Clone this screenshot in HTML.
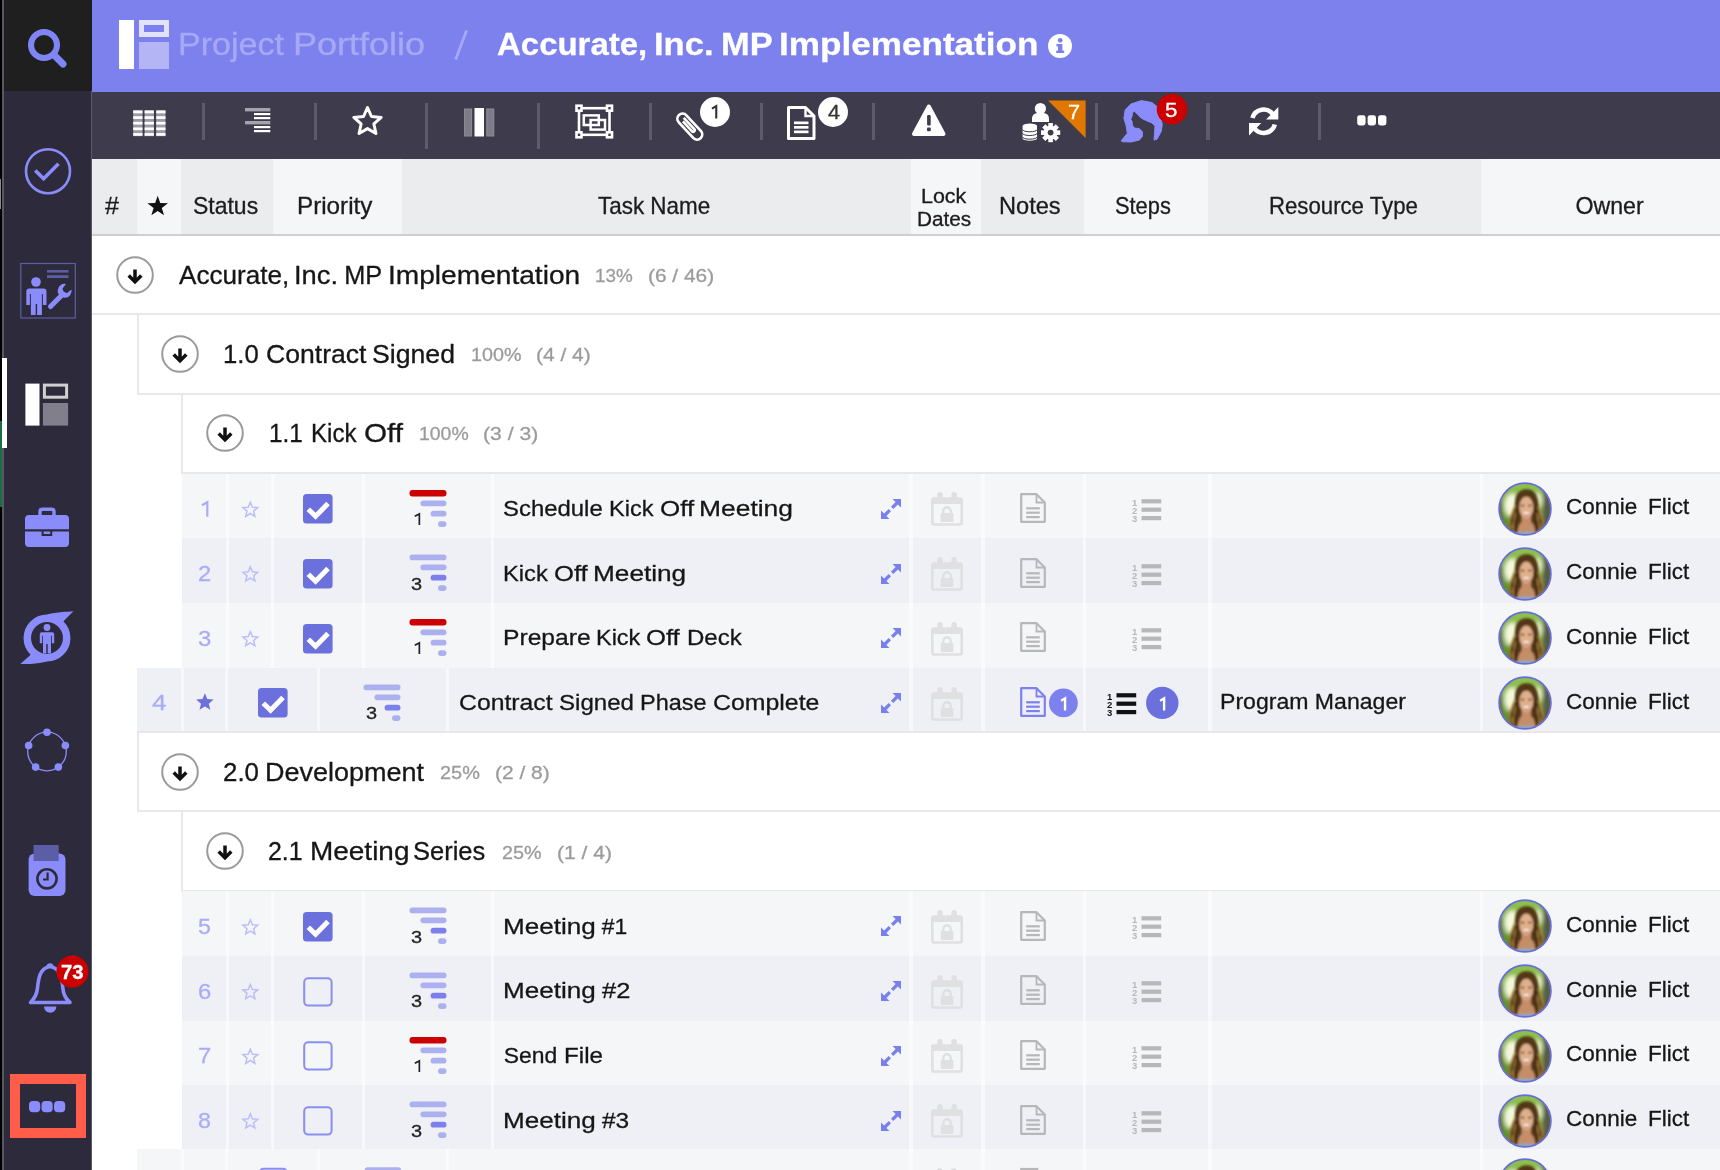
<!DOCTYPE html>
<html><head><meta charset="utf-8"><title>Project Portfolio</title>
<style>
html,body{margin:0;padding:0}
body{width:1720px;height:1170px;overflow:hidden;position:relative;background:#fff;font-family:"Liberation Sans",sans-serif}
body>div,#r>div,#r>svg,#t>span{position:absolute;display:block}
#t>span{white-space:pre;line-height:1;-webkit-text-stroke:0.3px;transform-origin:0 0}
svg{overflow:visible}
</style></head><body>
<div id="r" style="left:0;top:0;width:1720px;height:1170px;will-change:transform">
<div style="left:0.00px;top:0.00px;width:2.20px;height:1170.00px;background:#000;"></div>
<div style="left:2.20px;top:0.00px;width:1.80px;height:1170.00px;background:#585765;"></div>
<div style="left:4.00px;top:0.00px;width:88.00px;height:1170.00px;background:#2d2b3b;"></div>
<div style="left:4.00px;top:0.00px;width:88.00px;height:91.40px;background:#1f1f1f;"></div>
<div style="left:0.00px;top:421.00px;width:1.60px;height:86.00px;background:#167046;"></div>
<div style="left:0.00px;top:179.00px;width:1.20px;height:30.00px;background:#8a8a8a;"></div>
<div style="left:2.30px;top:358.00px;width:5.20px;height:90.00px;background:#fff;"></div>
<div style="left:92.00px;top:90.00px;width:1628.00px;height:71.00px;background:#3d3b4c;"></div>
<div style="left:92.00px;top:0.00px;width:1628.00px;height:91.50px;background:#7c81ee;"></div>
<div style="left:91.30px;top:91.20px;width:1.20px;height:1079.00px;background:#5c5b68;"></div>
<div style="left:119.00px;top:20.00px;width:15.00px;height:49.00px;background:#fff;"></div>
<div style="left:139.00px;top:20.00px;width:30.00px;height:17.00px;background:#e1e2fb;"></div>
<div style="left:144.00px;top:25.00px;width:20.00px;height:7.00px;background:#7c81ee;"></div>
<div style="left:139.00px;top:42.00px;width:30.00px;height:27.00px;background:#b3b5f5;"></div>
<svg style="left:450.00px;top:25.00px;" width="24" height="40" viewBox="0 0 24 40"><line x1="5.6" y1="34.4" x2="16.6" y2="5.4" stroke="#a6a9f5" stroke-width="2.7"/></svg>
<svg style="left:1047.50px;top:34.00px;" width="24" height="24" viewBox="0 0 24 24"><circle cx="12" cy="12" r="12" fill="#fff"/><rect x="10" y="10" width="4.4" height="8.5" fill="#7c81ee"/><rect x="8.4" y="10" width="4" height="2.4" fill="#7c81ee"/><rect x="8.2" y="16.6" width="8" height="2.4" fill="#7c81ee"/><circle cx="12.2" cy="6.3" r="2.4" fill="#7c81ee"/></svg>
<svg style="left:0;top:0" width="92" height="1170" viewBox="0 0 92 1170"><circle cx="44" cy="45" r="13" fill="none" stroke="#8085f5" stroke-width="6"/><line x1="54" y1="55" x2="63" y2="64" stroke="#8085f5" stroke-width="7" stroke-linecap="round"/><circle cx="48" cy="171.2" r="22" fill="none" stroke="#8a8cfb" stroke-width="2.6"/><polyline points="35.3,170.4 43.6,178.8 58.5,163.8" fill="none" stroke="#8a8cfb" stroke-width="3.6"/><rect x="20.8" y="263.5" width="54.5" height="54.5" fill="none" stroke="#5b5ea5" stroke-width="1.2"/><rect x="47" y="270" width="21.5" height="2.6" fill="#5b5ea5"/><rect x="47" y="275.2" width="21.5" height="2.8" fill="#5b5ea5"/><circle cx="36" cy="282" r="4.8" fill="#8a8cfb"/><path d="M28.5 288.5 h15 a3 3 0 0 1 3 3 v13.5 h-3.6 v-11 h-1 v21 h-4.8 v-11 h-1.4 v11 h-4.8 v-21 h-1 v11 h-3.6 v-13.5 a3 3 0 0 1 3 -3z" fill="#8a8cfb"/><line x1="50.5" y1="306.5" x2="63" y2="294" stroke="#8a8cfb" stroke-width="5" stroke-linecap="round"/><path d="M71.5 289.5 a7 7 0 1 1 -5.5 -5.5 l-3.5 4.5 l1 3.5 l3.5 1 z" fill="#8a8cfb"/><rect x="25.4" y="383.6" width="14.1" height="42" fill="#fff"/><rect x="44.4" y="385.1" width="22.2" height="12.1" fill="none" stroke="#d0d0d0" stroke-width="3"/><rect x="42.9" y="403" width="25.2" height="22.6" fill="#807f8b"/><path d="M40 515 v-3.5 a2.2 2.2 0 0 1 2.2 -2.2 h9.6 a2.2 2.2 0 0 1 2.2 2.2 v3.5" fill="none" stroke="#8a8cfb" stroke-width="3.4"/><path d="M29 515 h36 a4 4 0 0 1 4 4 v10.2 h-44 v-10.2 a4 4 0 0 1 4 -4z M25 531.4 h16.6 v4.6 h10.6 v-4.6 h16.8 v11.6 a4 4 0 0 1 -4 4 h-36 a4 4 0 0 1 -4 -4z M43.6 531.4 h6.6 v2.6 h-6.6z" fill="#8a8cfb"/><circle cx="47" cy="638" r="19.7" fill="none" stroke="#8a8cfb" stroke-width="7.5"/><path d="M47 614.5 C58 611.5 67 612 73.4 611.2 C69 616 65 619 62 623z M47 661.5 C36 664.5 27 664 20.3 664 C25 660 29 656.5 32 653z" fill="#8a8cfb"/><circle cx="47" cy="627.5" r="3.4" fill="#8a8cfb"/><path d="M41.8 632.3 h10.4 a2 2 0 0 1 2 2 v9 h-2.4 v-7.5 h-.8 v17.6 h-3.3 v-9.5 h-1.4 v9.5 h-3.3 v-17.6 h-.8 v7.5 h-2.4 v-9 a2 2 0 0 1 2 -2z" fill="#8a8cfb"/><circle cx="47" cy="751.5" r="19.3" fill="none" stroke="#8a8cfb" stroke-width="1.3"/><circle cx="47.00" cy="732.20" r="3.8" fill="#8a8cfb"/><circle cx="65.36" cy="745.54" r="3.8" fill="#8a8cfb"/><circle cx="58.34" cy="767.11" r="3.8" fill="#8a8cfb"/><circle cx="35.66" cy="767.11" r="3.8" fill="#8a8cfb"/><circle cx="28.64" cy="745.54" r="3.8" fill="#8a8cfb"/><rect x="28.6" y="853.6" width="36.9" height="42.4" rx="6" fill="#8a8cfb"/><rect x="33.5" y="845" width="25.2" height="16" fill="#5b5ea5"/><circle cx="47" cy="878.8" r="9.6" fill="none" stroke="#2d2b3b" stroke-width="2.6"/><path d="M47.6 872.5 v7 h-4.6" fill="none" stroke="#2d2b3b" stroke-width="2.2"/><path d="M50 966.5 C40 968 38.5 978 37.5 988 C36.8 996 33 1000 30.5 1002.5 H70 C67 1000 63.5 996 62.8 988 C62 978 60 968 50 966.5z" fill="none" stroke="#8a8cfb" stroke-width="3.6" stroke-linejoin="round"/><path d="M46.5 966 a3.6 3.6 0 0 1 7 0z" fill="#8a8cfb"/><path d="M44 1006.5 h12.4 a6.2 6.2 0 0 1 -12.4 0z" fill="#8a8cfb"/><circle cx="72.4" cy="971.6" r="16" fill="#cc0000"/><rect x="15" y="1079" width="66" height="54" fill="none" stroke="#ff5c49" stroke-width="10"/><rect x="29" y="1101" width="11.2" height="11.2" rx="4" fill="#8a8cfb"/><rect x="41.5" y="1101" width="11.2" height="11.2" rx="4" fill="#8a8cfb"/><rect x="54" y="1101" width="11.2" height="11.2" rx="4" fill="#8a8cfb"/></svg>
<div style="left:202.00px;top:102.50px;width:3.30px;height:37.50px;background:#5d5c69;"></div>
<div style="left:313.50px;top:102.50px;width:3.30px;height:37.50px;background:#5d5c69;"></div>
<div style="left:425.00px;top:102.50px;width:3.30px;height:46.50px;background:#5d5c69;"></div>
<div style="left:537.00px;top:102.50px;width:3.30px;height:46.50px;background:#5d5c69;"></div>
<div style="left:648.50px;top:102.50px;width:3.30px;height:37.50px;background:#5d5c69;"></div>
<div style="left:760.00px;top:102.50px;width:3.30px;height:37.50px;background:#5d5c69;"></div>
<div style="left:871.50px;top:102.50px;width:3.30px;height:37.50px;background:#5d5c69;"></div>
<div style="left:983.00px;top:102.50px;width:3.30px;height:37.50px;background:#5d5c69;"></div>
<div style="left:1094.50px;top:102.50px;width:3.30px;height:37.50px;background:#5d5c69;"></div>
<div style="left:1206.30px;top:102.50px;width:3.30px;height:37.50px;background:#5d5c69;"></div>
<div style="left:1317.70px;top:102.50px;width:3.30px;height:37.50px;background:#5d5c69;"></div>
<svg style="left:0;top:0" width="1720" height="160" viewBox="0 0 1720 160"><rect x="133.2" y="110" width="9.3" height="26.2" fill="#9c9ba6"/><rect x="133.2" y="110.60" width="9.3" height="2.7" fill="#fff"/><rect x="133.2" y="116.22" width="9.3" height="2.7" fill="#fff"/><rect x="133.2" y="121.84" width="9.3" height="2.7" fill="#fff"/><rect x="133.2" y="127.46" width="9.3" height="2.7" fill="#fff"/><rect x="133.2" y="133.08" width="9.3" height="2.7" fill="#fff"/><rect x="144.6" y="110" width="9.3" height="26.2" fill="#9c9ba6"/><rect x="144.6" y="110.60" width="9.3" height="2.7" fill="#fff"/><rect x="144.6" y="116.22" width="9.3" height="2.7" fill="#fff"/><rect x="144.6" y="121.84" width="9.3" height="2.7" fill="#fff"/><rect x="144.6" y="127.46" width="9.3" height="2.7" fill="#fff"/><rect x="144.6" y="133.08" width="9.3" height="2.7" fill="#fff"/><rect x="156.2" y="110" width="9.3" height="26.2" fill="#9c9ba6"/><rect x="156.2" y="110.60" width="9.3" height="2.7" fill="#fff"/><rect x="156.2" y="116.22" width="9.3" height="2.7" fill="#fff"/><rect x="156.2" y="121.84" width="9.3" height="2.7" fill="#fff"/><rect x="156.2" y="127.46" width="9.3" height="2.7" fill="#fff"/><rect x="156.2" y="133.08" width="9.3" height="2.7" fill="#fff"/><rect x="245" y="108" width="25.3" height="3.4" fill="#a3a2ad"/><rect x="254" y="113" width="16.3" height="2.2" fill="#fff"/><rect x="254" y="117" width="16.3" height="2.2" fill="#fff"/><rect x="245" y="121" width="25.3" height="3.4" fill="#a3a2ad"/><rect x="254" y="126" width="16.3" height="2.2" fill="#fff"/><rect x="254" y="130" width="16.3" height="2.2" fill="#fff"/><polygon points="367.50,107.50 371.44,116.48 381.20,117.45 373.87,123.97 375.96,133.55 367.50,128.60 359.04,133.55 361.13,123.97 353.80,117.45 363.56,116.48" fill="none" stroke="#fff" stroke-width="3" stroke-linejoin="round"/><rect x="464.6" y="109" width="7" height="27" fill="#7d7c88" stroke="#8f8e99" stroke-width="1"/><rect x="474.5" y="108" width="9.5" height="28.5" fill="#fff"/><rect x="486.8" y="109" width="7" height="27" fill="#7d7c88" stroke="#8f8e99" stroke-width="1"/><rect x="579" y="108.2" width="30.5" height="26.6" fill="none" stroke="#fff" stroke-width="2.6"/><rect x="575.2" y="104.4" width="7.6" height="7.6" fill="#fff"/><rect x="577.8" y="107.0" width="2.4" height="2.4" fill="#3d3b4c"/><rect x="605.7" y="104.4" width="7.6" height="7.6" fill="#fff"/><rect x="608.3" y="107.0" width="2.4" height="2.4" fill="#3d3b4c"/><rect x="575.2" y="131.0" width="7.6" height="7.6" fill="#fff"/><rect x="577.8" y="133.60000000000002" width="2.4" height="2.4" fill="#3d3b4c"/><rect x="605.7" y="131.0" width="7.6" height="7.6" fill="#fff"/><rect x="608.3" y="133.60000000000002" width="2.4" height="2.4" fill="#3d3b4c"/><rect x="583.8" y="115.4" width="15" height="9.6" fill="none" stroke="#fff" stroke-width="2.5"/><rect x="590.6" y="120" width="14.4" height="9.6" fill="none" stroke="#fff" stroke-width="2.5"/><g transform="translate(689.8,126.6) rotate(-43)"><rect x="-5.2" y="-15.8" width="10.4" height="31.6" rx="5.2" fill="none" stroke="#fff" stroke-width="2.7"/><path d="M-1.5 -8.5 v13.5 a1.5 1.5 0 0 0 3 0 v-15.5" fill="none" stroke="#fff" stroke-width="2.6"/></g><circle cx="715" cy="112" r="15" fill="#fff"/><path d="M788.5 107.5 h17 l8.5 8.5 v22.5 h-25.5z" fill="none" stroke="#fff" stroke-width="3" stroke-linejoin="round"/><path d="M805.5 107.5 v8.5 h8.5" fill="none" stroke="#fff" stroke-width="2.4"/><rect x="794" y="121.5" width="14.5" height="2.7" fill="#fff"/><rect x="794" y="126" width="14.5" height="2.7" fill="#fff"/><rect x="794" y="130.5" width="14.5" height="2.7" fill="#fff"/><circle cx="833" cy="112" r="15" fill="#fff"/><path d="M928.8 106.5 L943.5 134 H914 Z" fill="#fff" stroke="#fff" stroke-width="4" stroke-linejoin="round"/><rect x="927.1" y="115" width="3.6" height="10.5" rx="1" fill="#3d3b4c"/><rect x="927" y="127.5" width="3.8" height="3.8" rx="1" fill="#3d3b4c"/><circle cx="1040.4" cy="108.5" r="5.6" fill="#fff"/><path d="M1032 122 v-3.5 a5.5 5.5 0 0 1 5.5 -5.5 h6 a5.5 5.5 0 0 1 5.5 5.5 v3.5z" fill="#fff"/><rect x="1022.6" y="126" width="14.4" height="12.4" fill="#fff"/><ellipse cx="1029.8" cy="126" rx="7.2" ry="2.4" fill="#fff"/><ellipse cx="1029.8" cy="138.4" rx="7.2" ry="2.4" fill="#fff"/><path d="M1022.6 129.6 a7.2 2.2 0 0 0 14.4 0" fill="none" stroke="#3d3b4c" stroke-width="1"/><path d="M1022.6 133.3 a7.2 2.2 0 0 0 14.4 0" fill="none" stroke="#3d3b4c" stroke-width="1"/><path d="M1022.6 137 a7.2 2.2 0 0 0 14.4 0" fill="none" stroke="#3d3b4c" stroke-width="1"/><rect x="-2.3" y="-9.6" width="4.6" height="6" fill="#fff" transform="translate(1050.6,132.6) rotate(0)"/><rect x="-2.3" y="-9.6" width="4.6" height="6" fill="#fff" transform="translate(1050.6,132.6) rotate(45)"/><rect x="-2.3" y="-9.6" width="4.6" height="6" fill="#fff" transform="translate(1050.6,132.6) rotate(90)"/><rect x="-2.3" y="-9.6" width="4.6" height="6" fill="#fff" transform="translate(1050.6,132.6) rotate(135)"/><rect x="-2.3" y="-9.6" width="4.6" height="6" fill="#fff" transform="translate(1050.6,132.6) rotate(180)"/><rect x="-2.3" y="-9.6" width="4.6" height="6" fill="#fff" transform="translate(1050.6,132.6) rotate(225)"/><rect x="-2.3" y="-9.6" width="4.6" height="6" fill="#fff" transform="translate(1050.6,132.6) rotate(270)"/><rect x="-2.3" y="-9.6" width="4.6" height="6" fill="#fff" transform="translate(1050.6,132.6) rotate(315)"/><circle cx="1050.6" cy="132.6" r="6.8" fill="#fff"/><circle cx="1050.6" cy="132.6" r="2.9" fill="#3d3b4c"/><polygon points="1048,100.6 1085.6,100.6 1085.6,138" fill="#e07800"/><polygon points="1121.25,140.7 1127.3,133.3 1126.2,126 1123.9,118.2 1125.2,109.8 1130.9,104 1141.4,100.6 1151.9,102.5 1157.1,106.7 1160.2,115.5 1162.3,124.4 1161.3,131.2 1157.1,139.1 1154,140.1 1154.5,133.9 1155,126 1151.9,122.9 1146.6,120.8 1141.4,118.2 1137.2,114 1134.6,111.4 1132.5,112.4 1132,116.6 1130.7,119.2 1132,121.3 1132.5,125.5 1134.6,128.1 1139.3,128.6 1142.4,131.8 1142.4,136.5 1139.3,140.1 1130.9,142 1122,141.7" fill="#8a8cfb" stroke="#8a8cfb" stroke-width="1" stroke-linejoin="round"/><circle cx="1172" cy="109.3" r="15.3" fill="#cc0000"/><path d="M1252.5 118 A11.5 11.5 0 0 1 1273 114.5" fill="none" stroke="#fff" stroke-width="4.6"/><polygon points="1278.3,107 1278.3,119.5 1266,119.5" fill="#fff"/><path d="M1274.8 124.5 A11.5 11.5 0 0 1 1254.3 128" fill="none" stroke="#fff" stroke-width="4.6"/><polygon points="1249,135.5 1249,123 1261.3,123" fill="#fff"/><rect x="1357.2" y="115.2" width="8.4" height="10.2" rx="2.4" fill="#fff"/><rect x="1367.6" y="115.2" width="8.4" height="10.2" rx="2.4" fill="#fff"/><rect x="1378" y="115.2" width="8.4" height="10.2" rx="2.4" fill="#fff"/></svg>
<div style="left:92.00px;top:158.50px;width:46.00px;height:76.00px;background:#ebecee;"></div>
<div style="left:136.50px;top:158.50px;width:45.60px;height:76.00px;background:#f5f6f8;"></div>
<div style="left:180.60px;top:158.50px;width:94.30px;height:76.00px;background:#ebecee;"></div>
<div style="left:273.40px;top:158.50px;width:129.60px;height:76.00px;background:#f5f6f8;"></div>
<div style="left:401.50px;top:158.50px;width:510.80px;height:76.00px;background:#ebecee;"></div>
<div style="left:910.80px;top:158.50px;width:71.90px;height:76.00px;background:#f5f6f8;"></div>
<div style="left:981.20px;top:158.50px;width:104.10px;height:76.00px;background:#ebecee;"></div>
<div style="left:1083.80px;top:158.50px;width:125.50px;height:76.00px;background:#f5f6f8;"></div>
<div style="left:1207.80px;top:158.50px;width:274.70px;height:76.00px;background:#ebecee;"></div>
<div style="left:1481.00px;top:158.50px;width:240.50px;height:76.00px;background:#f5f6f8;"></div>
<div style="left:92.00px;top:234.00px;width:1628.00px;height:2.00px;background:#cfcfd1;"></div>
<svg style="left:0;top:0" width="400" height="240"><polygon points="157.70,195.80 160.23,203.12 167.97,203.26 161.79,207.93 164.05,215.34 157.70,210.90 151.35,215.34 153.61,207.93 147.43,203.26 155.17,203.12" fill="#111"/></svg>
<div style="left:92.00px;top:313.40px;width:1628.00px;height:2.00px;background:#e8e8ea;"></div>
<svg style="left:112.70px;top:252.70px" width="44" height="44" viewBox="-22 -22 44 44"><circle cx="0" cy="0" r="17.8" fill="#fff" stroke="#9a9a9a" stroke-width="2"/><path d="M0 -5.6 V6.2 M-6.3 0.6 L0 6.9 L6.3 0.6" fill="none" stroke="#111" stroke-width="3.5" stroke-linejoin="miter"/></svg>
<div style="left:136.50px;top:392.70px;width:1583.50px;height:2.00px;background:#e8e8ea;"></div>
<div style="left:136.50px;top:315.00px;width:2.00px;height:79.30px;background:#e8e8ea;"></div>
<svg style="left:158.00px;top:331.90px" width="44" height="44" viewBox="-22 -22 44 44"><circle cx="0" cy="0" r="17.8" fill="#fff" stroke="#9a9a9a" stroke-width="2"/><path d="M0 -5.6 V6.2 M-6.3 0.6 L0 6.9 L6.3 0.6" fill="none" stroke="#111" stroke-width="3.5" stroke-linejoin="miter"/></svg>
<div style="left:181.00px;top:472.00px;width:1539.00px;height:2.00px;background:#e8e8ea;"></div>
<div style="left:181.00px;top:394.30px;width:2.00px;height:79.30px;background:#e8e8ea;"></div>
<svg style="left:203.00px;top:411.40px" width="44" height="44" viewBox="-22 -22 44 44"><circle cx="0" cy="0" r="17.8" fill="#fff" stroke="#9a9a9a" stroke-width="2"/><path d="M0 -5.6 V6.2 M-6.3 0.6 L0 6.9 L6.3 0.6" fill="none" stroke="#111" stroke-width="3.5" stroke-linejoin="miter"/></svg>
<div style="left:136.50px;top:731.40px;width:1583.50px;height:1.80px;background:#e8e8ea;"></div>
<div style="left:136.50px;top:810.00px;width:1583.50px;height:2.00px;background:#e8e8ea;"></div>
<div style="left:136.50px;top:733.00px;width:2.00px;height:78.60px;background:#e8e8ea;"></div>
<svg style="left:158.00px;top:749.50px" width="44" height="44" viewBox="-22 -22 44 44"><circle cx="0" cy="0" r="17.8" fill="#fff" stroke="#9a9a9a" stroke-width="2"/><path d="M0 -5.6 V6.2 M-6.3 0.6 L0 6.9 L6.3 0.6" fill="none" stroke="#111" stroke-width="3.5" stroke-linejoin="miter"/></svg>
<div style="left:181.00px;top:889.60px;width:1539.00px;height:2.00px;background:#e8e8ea;"></div>
<div style="left:181.00px;top:811.60px;width:2.00px;height:79.60px;background:#e8e8ea;"></div>
<svg style="left:203.00px;top:829.30px" width="44" height="44" viewBox="-22 -22 44 44"><circle cx="0" cy="0" r="17.8" fill="#fff" stroke="#9a9a9a" stroke-width="2"/><path d="M0 -5.6 V6.2 M-6.3 0.6 L0 6.9 L6.3 0.6" fill="none" stroke="#111" stroke-width="3.5" stroke-linejoin="miter"/></svg>
<div style="left:182.20px;top:473.60px;width:1537.80px;height:65.90px;background:#f5f6f8;"></div>
<div style="left:225.80px;top:473.60px;width:3.00px;height:64.70px;background:rgba(255,255,255,0.55);"></div>
<div style="left:270.60px;top:473.60px;width:3.00px;height:64.70px;background:rgba(255,255,255,0.55);"></div>
<div style="left:362.40px;top:473.60px;width:3.00px;height:64.70px;background:rgba(255,255,255,0.55);"></div>
<div style="left:491.40px;top:473.60px;width:3.00px;height:64.70px;background:rgba(255,255,255,0.55);"></div>
<div style="left:909.00px;top:473.60px;width:3.60px;height:64.70px;background:rgba(255,255,255,0.55);"></div>
<div style="left:981.20px;top:473.60px;width:3.60px;height:64.70px;background:rgba(255,255,255,0.55);"></div>
<div style="left:1082.60px;top:473.60px;width:3.60px;height:64.70px;background:rgba(255,255,255,0.55);"></div>
<div style="left:1208.00px;top:473.60px;width:3.60px;height:64.70px;background:rgba(255,255,255,0.55);"></div>
<div style="left:1479.80px;top:473.60px;width:3.60px;height:64.70px;background:rgba(255,255,255,0.55);"></div>
<svg style="left:0;top:0" width="400" height="1170"><polygon points="250.30,502.20 252.36,507.17 257.72,507.59 253.63,511.08 254.88,516.31 250.30,513.50 245.72,516.31 246.97,511.08 242.88,507.59 248.24,507.17" fill="none" stroke="#bcbef8" stroke-width="1.5"/></svg>
<svg style="left:303.15px;top:494.20px" width="30" height="30"><rect x="0" y="0" width="29.6" height="29.6" rx="3.6" fill="#6b70dd"/><polyline points="5.3,15.2 12.6,22.2 25,9.6" fill="none" stroke="#fff" stroke-width="5"/></svg>
<svg style="left:409.55px;top:489.70px" width="37" height="38"><rect x="-0.5" y="0" width="37" height="6.6" rx="3" fill="#cc0000"/><rect x="10.4" y="10.4" width="26.1" height="5.8" rx="2.9" fill="#adb0ee"/><rect x="20.6" y="20.8" width="15.9" height="5.8" rx="2.9" fill="#adb0ee"/><rect x="28" y="31.2" width="8.5" height="5.8" rx="2.9" fill="#adb0ee"/></svg>
<svg style="left:880.50px;top:498.80px" width="20" height="20"><path d="M11.5 0 H20 V8.5 L16.9 5.4 L12.3 10 L10 7.7 L14.6 3.1 Z M8.5 20 H0 V11.5 L3.1 14.6 L7.7 10 L10 12.3 L5.4 16.9 Z" fill="#7a7fee"/></svg>
<svg style="left:930.80px;top:492.40px" width="32" height="34"><rect x="1.3" y="6.5" width="29.4" height="26" rx="1.5" fill="none" stroke="#e0e0e3" stroke-width="2.6"/><rect x="1.3" y="6.5" width="29.4" height="5.5" fill="#e0e0e3"/><rect x="6.2" y="0" width="5.4" height="10" rx="2.7" fill="#e0e0e3"/><rect x="20.4" y="0" width="5.4" height="10" rx="2.7" fill="#e0e0e3"/><rect x="9.6" y="21" width="12.8" height="9" rx="1" fill="#e0e0e3"/><path d="M12.3 21.5 v-2.5 a3.7 3.7 0 0 1 7.4 0 v2.5" fill="none" stroke="#e0e0e3" stroke-width="2.4"/></svg>
<svg style="left:1020.00px;top:493.00px" width="26" height="30"><path d="M1.2 1.2 h15.3 l8.3 8.3 v19.3 h-23.6z" fill="none" stroke="#b7b7b9" stroke-width="2.2" stroke-linejoin="round"/><path d="M16.5 1.2 v8.3 h8.3" fill="none" stroke="#b7b7b9" stroke-width="1.8"/><rect x="6.2" y="14.2" width="13.6" height="2.2" fill="#b7b7b9"/><rect x="6.2" y="18.6" width="13.6" height="2.2" fill="#b7b7b9"/><rect x="6.2" y="23" width="13.6" height="2.2" fill="#b7b7b9"/></svg>
<svg style="left:1131.80px;top:495.80px" width="30" height="28"><rect x="9.5" y="3.2" width="19.7" height="4.2" fill="#b7b7b9"/><text x="0" y="9.600000000000001" font-size="9.5" font-weight="700" fill="#b7b7b9" font-family="Liberation Sans">1</text><rect x="9.5" y="11.6" width="19.7" height="4.2" fill="#b7b7b9"/><text x="0" y="18.0" font-size="9.5" font-weight="700" fill="#b7b7b9" font-family="Liberation Sans">2</text><rect x="9.5" y="20" width="19.7" height="4.2" fill="#b7b7b9"/><text x="0" y="26.4" font-size="9.5" font-weight="700" fill="#b7b7b9" font-family="Liberation Sans">3</text></svg>
<svg style="left:1496.50px;top:480.80px" width="56" height="56" viewBox="-28 -28 56 56"><defs><clipPath id="c1"><circle cx="0" cy="0" r="25.4"/></clipPath><filter id="b1" x="-20%" y="-20%" width="140%" height="140%"><feGaussianBlur stdDeviation="0.9"/></filter><filter id="bb1" x="-30%" y="-30%" width="160%" height="160%"><feGaussianBlur stdDeviation="2.2"/></filter></defs><g clip-path="url(#c1)"><rect x="-27" y="-27" width="54" height="54" fill="#7fae45"/><g filter="url(#bb1)"><ellipse cx="-13" cy="-4" rx="8" ry="12" fill="#f3f8dc"/><ellipse cx="-15" cy="14" rx="9" ry="7" fill="#5c9a2c"/><ellipse cx="0" cy="-22" rx="16" ry="6" fill="#8dc04e"/><ellipse cx="13" cy="-9" rx="4.5" ry="8" fill="#e3efc0"/><rect x="18" y="-20" width="9" height="48" fill="#56584a"/><rect x="-27" y="-8" width="5" height="30" fill="#5b6040"/></g><g filter="url(#b1)"><path d="M1.5 -19.8 C-6 -19.8 -9.8 -14 -10 -7 C-10.2 -1 -12.5 2 -14.5 7 C-17.5 14 -17.5 21 -14 27 L17 27 C20.5 21 20.5 14 17.5 8 C15 3 14 0 13.4 -6 C12.6 -14 9 -19.8 1.5 -19.8z" fill="#523819"/><path d="M-9.5 -3 C-13 1 -12 5 -14.5 9 C-17 13 -14 17 -15.5 21 M-8.5 3 C-11.5 7 -9 11 -11.5 15 C-13 18 -10.5 21 -11.5 25 M13 -2 C16 2 14.5 6 17 10 C19 14 16 18 17.5 22 M11.5 4 C14 8 12 12 14 16 C15.5 19 13 22 13.5 25" stroke="#a8823f" stroke-width="1.8" fill="none"/><path d="M-6.8 -2 C-9 3 -7.5 8 -9.5 12 C-11 16 -9 20 -9.5 24 M9.6 -1 C11.5 4 10 9 12 13 C13.5 17 11.5 21 12 24" stroke="#3a2611" stroke-width="1.8" fill="none"/><path d="M-3.4 6 h9.4 v7 c2.5 2 4 4 5 14 h-19 c1 -9 2 -12 4.6 -14z" fill="#c48e68"/><ellipse cx="1.3" cy="-1.6" rx="7" ry="10.8" fill="#e0b08c"/><path d="M-6.4 -5 C-6 -15 8 -16 9 -5 C7 -12 3 -13.4 1.5 -13.6 C0 -13.4 -4.5 -12 -6.4 -5z" fill="#4a3118"/><rect x="-4.2" y="-4.2" width="3.6" height="1.6" rx=".8" fill="#5a3f33"/><rect x="3" y="-4.2" width="3.6" height="1.6" rx=".8" fill="#5a3f33"/><ellipse cx="1.2" cy="4.4" rx="2.7" ry="1.2" fill="#fff"/><path d="M-1.6 5.6 a2.9 1.6 0 0 0 5.6 0z" fill="#b9555a"/><path d="M-11 24.2 C-5 21.8 7 21.8 13 24.2 V29 H-11z" fill="#93a6bd"/></g></g><circle cx="0" cy="0" r="25.9" fill="none" stroke="#676cd8" stroke-width="1.7"/></svg>
<div style="left:182.20px;top:538.30px;width:1537.80px;height:65.90px;background:#eff0f5;"></div>
<div style="left:225.80px;top:538.30px;width:3.00px;height:64.70px;background:rgba(255,255,255,0.55);"></div>
<div style="left:270.60px;top:538.30px;width:3.00px;height:64.70px;background:rgba(255,255,255,0.55);"></div>
<div style="left:362.40px;top:538.30px;width:3.00px;height:64.70px;background:rgba(255,255,255,0.55);"></div>
<div style="left:491.40px;top:538.30px;width:3.00px;height:64.70px;background:rgba(255,255,255,0.55);"></div>
<div style="left:909.00px;top:538.30px;width:3.60px;height:64.70px;background:rgba(255,255,255,0.55);"></div>
<div style="left:981.20px;top:538.30px;width:3.60px;height:64.70px;background:rgba(255,255,255,0.55);"></div>
<div style="left:1082.60px;top:538.30px;width:3.60px;height:64.70px;background:rgba(255,255,255,0.55);"></div>
<div style="left:1208.00px;top:538.30px;width:3.60px;height:64.70px;background:rgba(255,255,255,0.55);"></div>
<div style="left:1479.80px;top:538.30px;width:3.60px;height:64.70px;background:rgba(255,255,255,0.55);"></div>
<svg style="left:0;top:0" width="400" height="1170"><polygon points="250.30,566.90 252.36,571.87 257.72,572.29 253.63,575.78 254.88,581.01 250.30,578.20 245.72,581.01 246.97,575.78 242.88,572.29 248.24,571.87" fill="none" stroke="#bcbef8" stroke-width="1.5"/></svg>
<svg style="left:303.15px;top:558.90px" width="30" height="30"><rect x="0" y="0" width="29.6" height="29.6" rx="3.6" fill="#6b70dd"/><polyline points="5.3,15.2 12.6,22.2 25,9.6" fill="none" stroke="#fff" stroke-width="5"/></svg>
<svg style="left:409.55px;top:554.40px" width="37" height="38"><rect x="-0.5" y="0.6" width="37" height="5.6" rx="2.8" fill="#adb0ee"/><rect x="10.4" y="10.4" width="26.1" height="5.8" rx="2.9" fill="#adb0ee"/><rect x="20.6" y="20.8" width="15.9" height="5.8" rx="2.9" fill="#7b80ee"/><rect x="28" y="31.2" width="8.5" height="5.8" rx="2.9" fill="#adb0ee"/></svg>
<svg style="left:880.50px;top:563.50px" width="20" height="20"><path d="M11.5 0 H20 V8.5 L16.9 5.4 L12.3 10 L10 7.7 L14.6 3.1 Z M8.5 20 H0 V11.5 L3.1 14.6 L7.7 10 L10 12.3 L5.4 16.9 Z" fill="#7a7fee"/></svg>
<svg style="left:930.80px;top:557.10px" width="32" height="34"><rect x="1.3" y="6.5" width="29.4" height="26" rx="1.5" fill="none" stroke="#e0e0e3" stroke-width="2.6"/><rect x="1.3" y="6.5" width="29.4" height="5.5" fill="#e0e0e3"/><rect x="6.2" y="0" width="5.4" height="10" rx="2.7" fill="#e0e0e3"/><rect x="20.4" y="0" width="5.4" height="10" rx="2.7" fill="#e0e0e3"/><rect x="9.6" y="21" width="12.8" height="9" rx="1" fill="#e0e0e3"/><path d="M12.3 21.5 v-2.5 a3.7 3.7 0 0 1 7.4 0 v2.5" fill="none" stroke="#e0e0e3" stroke-width="2.4"/></svg>
<svg style="left:1020.00px;top:557.70px" width="26" height="30"><path d="M1.2 1.2 h15.3 l8.3 8.3 v19.3 h-23.6z" fill="none" stroke="#b7b7b9" stroke-width="2.2" stroke-linejoin="round"/><path d="M16.5 1.2 v8.3 h8.3" fill="none" stroke="#b7b7b9" stroke-width="1.8"/><rect x="6.2" y="14.2" width="13.6" height="2.2" fill="#b7b7b9"/><rect x="6.2" y="18.6" width="13.6" height="2.2" fill="#b7b7b9"/><rect x="6.2" y="23" width="13.6" height="2.2" fill="#b7b7b9"/></svg>
<svg style="left:1131.80px;top:560.50px" width="30" height="28"><rect x="9.5" y="3.2" width="19.7" height="4.2" fill="#b7b7b9"/><text x="0" y="9.600000000000001" font-size="9.5" font-weight="700" fill="#b7b7b9" font-family="Liberation Sans">1</text><rect x="9.5" y="11.6" width="19.7" height="4.2" fill="#b7b7b9"/><text x="0" y="18.0" font-size="9.5" font-weight="700" fill="#b7b7b9" font-family="Liberation Sans">2</text><rect x="9.5" y="20" width="19.7" height="4.2" fill="#b7b7b9"/><text x="0" y="26.4" font-size="9.5" font-weight="700" fill="#b7b7b9" font-family="Liberation Sans">3</text></svg>
<svg style="left:1496.50px;top:545.50px" width="56" height="56" viewBox="-28 -28 56 56"><defs><clipPath id="c2"><circle cx="0" cy="0" r="25.4"/></clipPath><filter id="b2" x="-20%" y="-20%" width="140%" height="140%"><feGaussianBlur stdDeviation="0.9"/></filter><filter id="bb2" x="-30%" y="-30%" width="160%" height="160%"><feGaussianBlur stdDeviation="2.2"/></filter></defs><g clip-path="url(#c2)"><rect x="-27" y="-27" width="54" height="54" fill="#7fae45"/><g filter="url(#bb2)"><ellipse cx="-13" cy="-4" rx="8" ry="12" fill="#f3f8dc"/><ellipse cx="-15" cy="14" rx="9" ry="7" fill="#5c9a2c"/><ellipse cx="0" cy="-22" rx="16" ry="6" fill="#8dc04e"/><ellipse cx="13" cy="-9" rx="4.5" ry="8" fill="#e3efc0"/><rect x="18" y="-20" width="9" height="48" fill="#56584a"/><rect x="-27" y="-8" width="5" height="30" fill="#5b6040"/></g><g filter="url(#b2)"><path d="M1.5 -19.8 C-6 -19.8 -9.8 -14 -10 -7 C-10.2 -1 -12.5 2 -14.5 7 C-17.5 14 -17.5 21 -14 27 L17 27 C20.5 21 20.5 14 17.5 8 C15 3 14 0 13.4 -6 C12.6 -14 9 -19.8 1.5 -19.8z" fill="#523819"/><path d="M-9.5 -3 C-13 1 -12 5 -14.5 9 C-17 13 -14 17 -15.5 21 M-8.5 3 C-11.5 7 -9 11 -11.5 15 C-13 18 -10.5 21 -11.5 25 M13 -2 C16 2 14.5 6 17 10 C19 14 16 18 17.5 22 M11.5 4 C14 8 12 12 14 16 C15.5 19 13 22 13.5 25" stroke="#a8823f" stroke-width="1.8" fill="none"/><path d="M-6.8 -2 C-9 3 -7.5 8 -9.5 12 C-11 16 -9 20 -9.5 24 M9.6 -1 C11.5 4 10 9 12 13 C13.5 17 11.5 21 12 24" stroke="#3a2611" stroke-width="1.8" fill="none"/><path d="M-3.4 6 h9.4 v7 c2.5 2 4 4 5 14 h-19 c1 -9 2 -12 4.6 -14z" fill="#c48e68"/><ellipse cx="1.3" cy="-1.6" rx="7" ry="10.8" fill="#e0b08c"/><path d="M-6.4 -5 C-6 -15 8 -16 9 -5 C7 -12 3 -13.4 1.5 -13.6 C0 -13.4 -4.5 -12 -6.4 -5z" fill="#4a3118"/><rect x="-4.2" y="-4.2" width="3.6" height="1.6" rx=".8" fill="#5a3f33"/><rect x="3" y="-4.2" width="3.6" height="1.6" rx=".8" fill="#5a3f33"/><ellipse cx="1.2" cy="4.4" rx="2.7" ry="1.2" fill="#fff"/><path d="M-1.6 5.6 a2.9 1.6 0 0 0 5.6 0z" fill="#b9555a"/><path d="M-11 24.2 C-5 21.8 7 21.8 13 24.2 V29 H-11z" fill="#93a6bd"/></g></g><circle cx="0" cy="0" r="25.9" fill="none" stroke="#676cd8" stroke-width="1.7"/></svg>
<div style="left:182.20px;top:603.00px;width:1537.80px;height:65.90px;background:#f5f6f8;"></div>
<div style="left:225.80px;top:603.00px;width:3.00px;height:64.70px;background:rgba(255,255,255,0.55);"></div>
<div style="left:270.60px;top:603.00px;width:3.00px;height:64.70px;background:rgba(255,255,255,0.55);"></div>
<div style="left:362.40px;top:603.00px;width:3.00px;height:64.70px;background:rgba(255,255,255,0.55);"></div>
<div style="left:491.40px;top:603.00px;width:3.00px;height:64.70px;background:rgba(255,255,255,0.55);"></div>
<div style="left:909.00px;top:603.00px;width:3.60px;height:64.70px;background:rgba(255,255,255,0.55);"></div>
<div style="left:981.20px;top:603.00px;width:3.60px;height:64.70px;background:rgba(255,255,255,0.55);"></div>
<div style="left:1082.60px;top:603.00px;width:3.60px;height:64.70px;background:rgba(255,255,255,0.55);"></div>
<div style="left:1208.00px;top:603.00px;width:3.60px;height:64.70px;background:rgba(255,255,255,0.55);"></div>
<div style="left:1479.80px;top:603.00px;width:3.60px;height:64.70px;background:rgba(255,255,255,0.55);"></div>
<svg style="left:0;top:0" width="400" height="1170"><polygon points="250.30,631.60 252.36,636.57 257.72,636.99 253.63,640.48 254.88,645.71 250.30,642.90 245.72,645.71 246.97,640.48 242.88,636.99 248.24,636.57" fill="none" stroke="#bcbef8" stroke-width="1.5"/></svg>
<svg style="left:303.15px;top:623.60px" width="30" height="30"><rect x="0" y="0" width="29.6" height="29.6" rx="3.6" fill="#6b70dd"/><polyline points="5.3,15.2 12.6,22.2 25,9.6" fill="none" stroke="#fff" stroke-width="5"/></svg>
<svg style="left:409.55px;top:619.10px" width="37" height="38"><rect x="-0.5" y="0" width="37" height="6.6" rx="3" fill="#cc0000"/><rect x="10.4" y="10.4" width="26.1" height="5.8" rx="2.9" fill="#adb0ee"/><rect x="20.6" y="20.8" width="15.9" height="5.8" rx="2.9" fill="#adb0ee"/><rect x="28" y="31.2" width="8.5" height="5.8" rx="2.9" fill="#adb0ee"/></svg>
<svg style="left:880.50px;top:628.20px" width="20" height="20"><path d="M11.5 0 H20 V8.5 L16.9 5.4 L12.3 10 L10 7.7 L14.6 3.1 Z M8.5 20 H0 V11.5 L3.1 14.6 L7.7 10 L10 12.3 L5.4 16.9 Z" fill="#7a7fee"/></svg>
<svg style="left:930.80px;top:621.80px" width="32" height="34"><rect x="1.3" y="6.5" width="29.4" height="26" rx="1.5" fill="none" stroke="#e0e0e3" stroke-width="2.6"/><rect x="1.3" y="6.5" width="29.4" height="5.5" fill="#e0e0e3"/><rect x="6.2" y="0" width="5.4" height="10" rx="2.7" fill="#e0e0e3"/><rect x="20.4" y="0" width="5.4" height="10" rx="2.7" fill="#e0e0e3"/><rect x="9.6" y="21" width="12.8" height="9" rx="1" fill="#e0e0e3"/><path d="M12.3 21.5 v-2.5 a3.7 3.7 0 0 1 7.4 0 v2.5" fill="none" stroke="#e0e0e3" stroke-width="2.4"/></svg>
<svg style="left:1020.00px;top:622.40px" width="26" height="30"><path d="M1.2 1.2 h15.3 l8.3 8.3 v19.3 h-23.6z" fill="none" stroke="#b7b7b9" stroke-width="2.2" stroke-linejoin="round"/><path d="M16.5 1.2 v8.3 h8.3" fill="none" stroke="#b7b7b9" stroke-width="1.8"/><rect x="6.2" y="14.2" width="13.6" height="2.2" fill="#b7b7b9"/><rect x="6.2" y="18.6" width="13.6" height="2.2" fill="#b7b7b9"/><rect x="6.2" y="23" width="13.6" height="2.2" fill="#b7b7b9"/></svg>
<svg style="left:1131.80px;top:625.20px" width="30" height="28"><rect x="9.5" y="3.2" width="19.7" height="4.2" fill="#b7b7b9"/><text x="0" y="9.600000000000001" font-size="9.5" font-weight="700" fill="#b7b7b9" font-family="Liberation Sans">1</text><rect x="9.5" y="11.6" width="19.7" height="4.2" fill="#b7b7b9"/><text x="0" y="18.0" font-size="9.5" font-weight="700" fill="#b7b7b9" font-family="Liberation Sans">2</text><rect x="9.5" y="20" width="19.7" height="4.2" fill="#b7b7b9"/><text x="0" y="26.4" font-size="9.5" font-weight="700" fill="#b7b7b9" font-family="Liberation Sans">3</text></svg>
<svg style="left:1496.50px;top:610.20px" width="56" height="56" viewBox="-28 -28 56 56"><defs><clipPath id="c3"><circle cx="0" cy="0" r="25.4"/></clipPath><filter id="b3" x="-20%" y="-20%" width="140%" height="140%"><feGaussianBlur stdDeviation="0.9"/></filter><filter id="bb3" x="-30%" y="-30%" width="160%" height="160%"><feGaussianBlur stdDeviation="2.2"/></filter></defs><g clip-path="url(#c3)"><rect x="-27" y="-27" width="54" height="54" fill="#7fae45"/><g filter="url(#bb3)"><ellipse cx="-13" cy="-4" rx="8" ry="12" fill="#f3f8dc"/><ellipse cx="-15" cy="14" rx="9" ry="7" fill="#5c9a2c"/><ellipse cx="0" cy="-22" rx="16" ry="6" fill="#8dc04e"/><ellipse cx="13" cy="-9" rx="4.5" ry="8" fill="#e3efc0"/><rect x="18" y="-20" width="9" height="48" fill="#56584a"/><rect x="-27" y="-8" width="5" height="30" fill="#5b6040"/></g><g filter="url(#b3)"><path d="M1.5 -19.8 C-6 -19.8 -9.8 -14 -10 -7 C-10.2 -1 -12.5 2 -14.5 7 C-17.5 14 -17.5 21 -14 27 L17 27 C20.5 21 20.5 14 17.5 8 C15 3 14 0 13.4 -6 C12.6 -14 9 -19.8 1.5 -19.8z" fill="#523819"/><path d="M-9.5 -3 C-13 1 -12 5 -14.5 9 C-17 13 -14 17 -15.5 21 M-8.5 3 C-11.5 7 -9 11 -11.5 15 C-13 18 -10.5 21 -11.5 25 M13 -2 C16 2 14.5 6 17 10 C19 14 16 18 17.5 22 M11.5 4 C14 8 12 12 14 16 C15.5 19 13 22 13.5 25" stroke="#a8823f" stroke-width="1.8" fill="none"/><path d="M-6.8 -2 C-9 3 -7.5 8 -9.5 12 C-11 16 -9 20 -9.5 24 M9.6 -1 C11.5 4 10 9 12 13 C13.5 17 11.5 21 12 24" stroke="#3a2611" stroke-width="1.8" fill="none"/><path d="M-3.4 6 h9.4 v7 c2.5 2 4 4 5 14 h-19 c1 -9 2 -12 4.6 -14z" fill="#c48e68"/><ellipse cx="1.3" cy="-1.6" rx="7" ry="10.8" fill="#e0b08c"/><path d="M-6.4 -5 C-6 -15 8 -16 9 -5 C7 -12 3 -13.4 1.5 -13.6 C0 -13.4 -4.5 -12 -6.4 -5z" fill="#4a3118"/><rect x="-4.2" y="-4.2" width="3.6" height="1.6" rx=".8" fill="#5a3f33"/><rect x="3" y="-4.2" width="3.6" height="1.6" rx=".8" fill="#5a3f33"/><ellipse cx="1.2" cy="4.4" rx="2.7" ry="1.2" fill="#fff"/><path d="M-1.6 5.6 a2.9 1.6 0 0 0 5.6 0z" fill="#b9555a"/><path d="M-11 24.2 C-5 21.8 7 21.8 13 24.2 V29 H-11z" fill="#93a6bd"/></g></g><circle cx="0" cy="0" r="25.9" fill="none" stroke="#676cd8" stroke-width="1.7"/></svg>
<div style="left:137.00px;top:667.70px;width:1583.00px;height:63.70px;background:#eff0f5;"></div>
<div style="left:180.60px;top:667.70px;width:3.00px;height:63.70px;background:rgba(255,255,255,0.55);"></div>
<div style="left:225.40px;top:667.70px;width:3.00px;height:63.70px;background:rgba(255,255,255,0.55);"></div>
<div style="left:317.00px;top:667.70px;width:3.00px;height:63.70px;background:rgba(255,255,255,0.55);"></div>
<div style="left:446.40px;top:667.70px;width:3.00px;height:63.70px;background:rgba(255,255,255,0.55);"></div>
<div style="left:909.00px;top:667.70px;width:3.60px;height:63.70px;background:rgba(255,255,255,0.55);"></div>
<div style="left:981.20px;top:667.70px;width:3.60px;height:63.70px;background:rgba(255,255,255,0.55);"></div>
<div style="left:1082.60px;top:667.70px;width:3.60px;height:63.70px;background:rgba(255,255,255,0.55);"></div>
<div style="left:1208.00px;top:667.70px;width:3.60px;height:63.70px;background:rgba(255,255,255,0.55);"></div>
<div style="left:1479.80px;top:667.70px;width:3.60px;height:63.70px;background:rgba(255,255,255,0.55);"></div>
<svg style="left:0;top:0" width="400" height="1170"><polygon points="204.90,693.20 207.31,699.08 213.65,699.56 208.80,703.67 210.31,709.84 204.90,706.50 199.49,709.84 201.00,703.67 196.15,699.56 202.49,699.08" fill="#6b70dd"/></svg>
<svg style="left:257.80px;top:688.30px" width="30" height="30"><rect x="0" y="0" width="29.6" height="29.6" rx="3.6" fill="#6b70dd"/><polyline points="5.3,15.2 12.6,22.2 25,9.6" fill="none" stroke="#fff" stroke-width="5"/></svg>
<svg style="left:364.40px;top:683.80px" width="37" height="38"><rect x="-0.5" y="0.6" width="37" height="5.6" rx="2.8" fill="#adb0ee"/><rect x="10.4" y="10.4" width="26.1" height="5.8" rx="2.9" fill="#adb0ee"/><rect x="20.6" y="20.8" width="15.9" height="5.8" rx="2.9" fill="#7b80ee"/><rect x="28" y="31.2" width="8.5" height="5.8" rx="2.9" fill="#adb0ee"/></svg>
<svg style="left:880.50px;top:692.90px" width="20" height="20"><path d="M11.5 0 H20 V8.5 L16.9 5.4 L12.3 10 L10 7.7 L14.6 3.1 Z M8.5 20 H0 V11.5 L3.1 14.6 L7.7 10 L10 12.3 L5.4 16.9 Z" fill="#7a7fee"/></svg>
<svg style="left:930.80px;top:686.50px" width="32" height="34"><rect x="1.3" y="6.5" width="29.4" height="26" rx="1.5" fill="none" stroke="#e0e0e3" stroke-width="2.6"/><rect x="1.3" y="6.5" width="29.4" height="5.5" fill="#e0e0e3"/><rect x="6.2" y="0" width="5.4" height="10" rx="2.7" fill="#e0e0e3"/><rect x="20.4" y="0" width="5.4" height="10" rx="2.7" fill="#e0e0e3"/><rect x="9.6" y="21" width="12.8" height="9" rx="1" fill="#e0e0e3"/><path d="M12.3 21.5 v-2.5 a3.7 3.7 0 0 1 7.4 0 v2.5" fill="none" stroke="#e0e0e3" stroke-width="2.4"/></svg>
<svg style="left:1020.00px;top:687.10px" width="26" height="30"><path d="M1.2 1.2 h15.3 l8.3 8.3 v19.3 h-23.6z" fill="none" stroke="#7c81ee" stroke-width="2.2" stroke-linejoin="round"/><path d="M16.5 1.2 v8.3 h8.3" fill="none" stroke="#7c81ee" stroke-width="1.8"/><rect x="6.2" y="14.2" width="13.6" height="2.2" fill="#7c81ee"/><rect x="6.2" y="18.6" width="13.6" height="2.2" fill="#7c81ee"/><rect x="6.2" y="23" width="13.6" height="2.2" fill="#7c81ee"/></svg>
<svg style="left:0;top:0" width="1720" height="1170"><circle cx="1063.4" cy="702.90" r="14.4" fill="#7c81ee"/></svg>
<svg style="left:1106.70px;top:689.90px" width="30" height="28"><rect x="9.5" y="3.2" width="19.7" height="4.2" fill="#111"/><text x="0" y="9.600000000000001" font-size="9.5" font-weight="700" fill="#111" font-family="Liberation Sans">1</text><rect x="9.5" y="11.6" width="19.7" height="4.2" fill="#111"/><text x="0" y="18.0" font-size="9.5" font-weight="700" fill="#111" font-family="Liberation Sans">2</text><rect x="9.5" y="20" width="19.7" height="4.2" fill="#111"/><text x="0" y="26.4" font-size="9.5" font-weight="700" fill="#111" font-family="Liberation Sans">3</text></svg>
<svg style="left:0;top:0" width="1720" height="1170"><circle cx="1162.3" cy="702.90" r="16.2" fill="#6b70dd"/></svg>
<svg style="left:1496.50px;top:674.90px" width="56" height="56" viewBox="-28 -28 56 56"><defs><clipPath id="c4"><circle cx="0" cy="0" r="25.4"/></clipPath><filter id="b4" x="-20%" y="-20%" width="140%" height="140%"><feGaussianBlur stdDeviation="0.9"/></filter><filter id="bb4" x="-30%" y="-30%" width="160%" height="160%"><feGaussianBlur stdDeviation="2.2"/></filter></defs><g clip-path="url(#c4)"><rect x="-27" y="-27" width="54" height="54" fill="#7fae45"/><g filter="url(#bb4)"><ellipse cx="-13" cy="-4" rx="8" ry="12" fill="#f3f8dc"/><ellipse cx="-15" cy="14" rx="9" ry="7" fill="#5c9a2c"/><ellipse cx="0" cy="-22" rx="16" ry="6" fill="#8dc04e"/><ellipse cx="13" cy="-9" rx="4.5" ry="8" fill="#e3efc0"/><rect x="18" y="-20" width="9" height="48" fill="#56584a"/><rect x="-27" y="-8" width="5" height="30" fill="#5b6040"/></g><g filter="url(#b4)"><path d="M1.5 -19.8 C-6 -19.8 -9.8 -14 -10 -7 C-10.2 -1 -12.5 2 -14.5 7 C-17.5 14 -17.5 21 -14 27 L17 27 C20.5 21 20.5 14 17.5 8 C15 3 14 0 13.4 -6 C12.6 -14 9 -19.8 1.5 -19.8z" fill="#523819"/><path d="M-9.5 -3 C-13 1 -12 5 -14.5 9 C-17 13 -14 17 -15.5 21 M-8.5 3 C-11.5 7 -9 11 -11.5 15 C-13 18 -10.5 21 -11.5 25 M13 -2 C16 2 14.5 6 17 10 C19 14 16 18 17.5 22 M11.5 4 C14 8 12 12 14 16 C15.5 19 13 22 13.5 25" stroke="#a8823f" stroke-width="1.8" fill="none"/><path d="M-6.8 -2 C-9 3 -7.5 8 -9.5 12 C-11 16 -9 20 -9.5 24 M9.6 -1 C11.5 4 10 9 12 13 C13.5 17 11.5 21 12 24" stroke="#3a2611" stroke-width="1.8" fill="none"/><path d="M-3.4 6 h9.4 v7 c2.5 2 4 4 5 14 h-19 c1 -9 2 -12 4.6 -14z" fill="#c48e68"/><ellipse cx="1.3" cy="-1.6" rx="7" ry="10.8" fill="#e0b08c"/><path d="M-6.4 -5 C-6 -15 8 -16 9 -5 C7 -12 3 -13.4 1.5 -13.6 C0 -13.4 -4.5 -12 -6.4 -5z" fill="#4a3118"/><rect x="-4.2" y="-4.2" width="3.6" height="1.6" rx=".8" fill="#5a3f33"/><rect x="3" y="-4.2" width="3.6" height="1.6" rx=".8" fill="#5a3f33"/><ellipse cx="1.2" cy="4.4" rx="2.7" ry="1.2" fill="#fff"/><path d="M-1.6 5.6 a2.9 1.6 0 0 0 5.6 0z" fill="#b9555a"/><path d="M-11 24.2 C-5 21.8 7 21.8 13 24.2 V29 H-11z" fill="#93a6bd"/></g></g><circle cx="0" cy="0" r="25.9" fill="none" stroke="#676cd8" stroke-width="1.7"/></svg>
<div style="left:182.20px;top:891.20px;width:1537.80px;height:65.90px;background:#f5f6f8;"></div>
<div style="left:225.80px;top:891.20px;width:3.00px;height:64.70px;background:rgba(255,255,255,0.55);"></div>
<div style="left:270.60px;top:891.20px;width:3.00px;height:64.70px;background:rgba(255,255,255,0.55);"></div>
<div style="left:362.40px;top:891.20px;width:3.00px;height:64.70px;background:rgba(255,255,255,0.55);"></div>
<div style="left:491.40px;top:891.20px;width:3.00px;height:64.70px;background:rgba(255,255,255,0.55);"></div>
<div style="left:909.00px;top:891.20px;width:3.60px;height:64.70px;background:rgba(255,255,255,0.55);"></div>
<div style="left:981.20px;top:891.20px;width:3.60px;height:64.70px;background:rgba(255,255,255,0.55);"></div>
<div style="left:1082.60px;top:891.20px;width:3.60px;height:64.70px;background:rgba(255,255,255,0.55);"></div>
<div style="left:1208.00px;top:891.20px;width:3.60px;height:64.70px;background:rgba(255,255,255,0.55);"></div>
<div style="left:1479.80px;top:891.20px;width:3.60px;height:64.70px;background:rgba(255,255,255,0.55);"></div>
<svg style="left:0;top:0" width="400" height="1170"><polygon points="250.30,919.80 252.36,924.77 257.72,925.19 253.63,928.68 254.88,933.91 250.30,931.10 245.72,933.91 246.97,928.68 242.88,925.19 248.24,924.77" fill="none" stroke="#bcbef8" stroke-width="1.5"/></svg>
<svg style="left:303.15px;top:911.80px" width="30" height="30"><rect x="0" y="0" width="29.6" height="29.6" rx="3.6" fill="#6b70dd"/><polyline points="5.3,15.2 12.6,22.2 25,9.6" fill="none" stroke="#fff" stroke-width="5"/></svg>
<svg style="left:409.55px;top:907.30px" width="37" height="38"><rect x="-0.5" y="0.6" width="37" height="5.6" rx="2.8" fill="#adb0ee"/><rect x="10.4" y="10.4" width="26.1" height="5.8" rx="2.9" fill="#adb0ee"/><rect x="20.6" y="20.8" width="15.9" height="5.8" rx="2.9" fill="#7b80ee"/><rect x="28" y="31.2" width="8.5" height="5.8" rx="2.9" fill="#adb0ee"/></svg>
<svg style="left:880.50px;top:916.40px" width="20" height="20"><path d="M11.5 0 H20 V8.5 L16.9 5.4 L12.3 10 L10 7.7 L14.6 3.1 Z M8.5 20 H0 V11.5 L3.1 14.6 L7.7 10 L10 12.3 L5.4 16.9 Z" fill="#7a7fee"/></svg>
<svg style="left:930.80px;top:910.00px" width="32" height="34"><rect x="1.3" y="6.5" width="29.4" height="26" rx="1.5" fill="none" stroke="#e0e0e3" stroke-width="2.6"/><rect x="1.3" y="6.5" width="29.4" height="5.5" fill="#e0e0e3"/><rect x="6.2" y="0" width="5.4" height="10" rx="2.7" fill="#e0e0e3"/><rect x="20.4" y="0" width="5.4" height="10" rx="2.7" fill="#e0e0e3"/><rect x="9.6" y="21" width="12.8" height="9" rx="1" fill="#e0e0e3"/><path d="M12.3 21.5 v-2.5 a3.7 3.7 0 0 1 7.4 0 v2.5" fill="none" stroke="#e0e0e3" stroke-width="2.4"/></svg>
<svg style="left:1020.00px;top:910.60px" width="26" height="30"><path d="M1.2 1.2 h15.3 l8.3 8.3 v19.3 h-23.6z" fill="none" stroke="#b7b7b9" stroke-width="2.2" stroke-linejoin="round"/><path d="M16.5 1.2 v8.3 h8.3" fill="none" stroke="#b7b7b9" stroke-width="1.8"/><rect x="6.2" y="14.2" width="13.6" height="2.2" fill="#b7b7b9"/><rect x="6.2" y="18.6" width="13.6" height="2.2" fill="#b7b7b9"/><rect x="6.2" y="23" width="13.6" height="2.2" fill="#b7b7b9"/></svg>
<svg style="left:1131.80px;top:913.40px" width="30" height="28"><rect x="9.5" y="3.2" width="19.7" height="4.2" fill="#b7b7b9"/><text x="0" y="9.600000000000001" font-size="9.5" font-weight="700" fill="#b7b7b9" font-family="Liberation Sans">1</text><rect x="9.5" y="11.6" width="19.7" height="4.2" fill="#b7b7b9"/><text x="0" y="18.0" font-size="9.5" font-weight="700" fill="#b7b7b9" font-family="Liberation Sans">2</text><rect x="9.5" y="20" width="19.7" height="4.2" fill="#b7b7b9"/><text x="0" y="26.4" font-size="9.5" font-weight="700" fill="#b7b7b9" font-family="Liberation Sans">3</text></svg>
<svg style="left:1496.50px;top:898.40px" width="56" height="56" viewBox="-28 -28 56 56"><defs><clipPath id="c5"><circle cx="0" cy="0" r="25.4"/></clipPath><filter id="b5" x="-20%" y="-20%" width="140%" height="140%"><feGaussianBlur stdDeviation="0.9"/></filter><filter id="bb5" x="-30%" y="-30%" width="160%" height="160%"><feGaussianBlur stdDeviation="2.2"/></filter></defs><g clip-path="url(#c5)"><rect x="-27" y="-27" width="54" height="54" fill="#7fae45"/><g filter="url(#bb5)"><ellipse cx="-13" cy="-4" rx="8" ry="12" fill="#f3f8dc"/><ellipse cx="-15" cy="14" rx="9" ry="7" fill="#5c9a2c"/><ellipse cx="0" cy="-22" rx="16" ry="6" fill="#8dc04e"/><ellipse cx="13" cy="-9" rx="4.5" ry="8" fill="#e3efc0"/><rect x="18" y="-20" width="9" height="48" fill="#56584a"/><rect x="-27" y="-8" width="5" height="30" fill="#5b6040"/></g><g filter="url(#b5)"><path d="M1.5 -19.8 C-6 -19.8 -9.8 -14 -10 -7 C-10.2 -1 -12.5 2 -14.5 7 C-17.5 14 -17.5 21 -14 27 L17 27 C20.5 21 20.5 14 17.5 8 C15 3 14 0 13.4 -6 C12.6 -14 9 -19.8 1.5 -19.8z" fill="#523819"/><path d="M-9.5 -3 C-13 1 -12 5 -14.5 9 C-17 13 -14 17 -15.5 21 M-8.5 3 C-11.5 7 -9 11 -11.5 15 C-13 18 -10.5 21 -11.5 25 M13 -2 C16 2 14.5 6 17 10 C19 14 16 18 17.5 22 M11.5 4 C14 8 12 12 14 16 C15.5 19 13 22 13.5 25" stroke="#a8823f" stroke-width="1.8" fill="none"/><path d="M-6.8 -2 C-9 3 -7.5 8 -9.5 12 C-11 16 -9 20 -9.5 24 M9.6 -1 C11.5 4 10 9 12 13 C13.5 17 11.5 21 12 24" stroke="#3a2611" stroke-width="1.8" fill="none"/><path d="M-3.4 6 h9.4 v7 c2.5 2 4 4 5 14 h-19 c1 -9 2 -12 4.6 -14z" fill="#c48e68"/><ellipse cx="1.3" cy="-1.6" rx="7" ry="10.8" fill="#e0b08c"/><path d="M-6.4 -5 C-6 -15 8 -16 9 -5 C7 -12 3 -13.4 1.5 -13.6 C0 -13.4 -4.5 -12 -6.4 -5z" fill="#4a3118"/><rect x="-4.2" y="-4.2" width="3.6" height="1.6" rx=".8" fill="#5a3f33"/><rect x="3" y="-4.2" width="3.6" height="1.6" rx=".8" fill="#5a3f33"/><ellipse cx="1.2" cy="4.4" rx="2.7" ry="1.2" fill="#fff"/><path d="M-1.6 5.6 a2.9 1.6 0 0 0 5.6 0z" fill="#b9555a"/><path d="M-11 24.2 C-5 21.8 7 21.8 13 24.2 V29 H-11z" fill="#93a6bd"/></g></g><circle cx="0" cy="0" r="25.9" fill="none" stroke="#676cd8" stroke-width="1.7"/></svg>
<div style="left:182.20px;top:955.90px;width:1537.80px;height:65.90px;background:#eff0f5;"></div>
<div style="left:225.80px;top:955.90px;width:3.00px;height:64.70px;background:rgba(255,255,255,0.55);"></div>
<div style="left:270.60px;top:955.90px;width:3.00px;height:64.70px;background:rgba(255,255,255,0.55);"></div>
<div style="left:362.40px;top:955.90px;width:3.00px;height:64.70px;background:rgba(255,255,255,0.55);"></div>
<div style="left:491.40px;top:955.90px;width:3.00px;height:64.70px;background:rgba(255,255,255,0.55);"></div>
<div style="left:909.00px;top:955.90px;width:3.60px;height:64.70px;background:rgba(255,255,255,0.55);"></div>
<div style="left:981.20px;top:955.90px;width:3.60px;height:64.70px;background:rgba(255,255,255,0.55);"></div>
<div style="left:1082.60px;top:955.90px;width:3.60px;height:64.70px;background:rgba(255,255,255,0.55);"></div>
<div style="left:1208.00px;top:955.90px;width:3.60px;height:64.70px;background:rgba(255,255,255,0.55);"></div>
<div style="left:1479.80px;top:955.90px;width:3.60px;height:64.70px;background:rgba(255,255,255,0.55);"></div>
<svg style="left:0;top:0" width="400" height="1170"><polygon points="250.30,984.50 252.36,989.47 257.72,989.89 253.63,993.38 254.88,998.61 250.30,995.80 245.72,998.61 246.97,993.38 242.88,989.89 248.24,989.47" fill="none" stroke="#bcbef8" stroke-width="1.5"/></svg>
<svg style="left:303.15px;top:976.50px" width="30" height="30"><rect x="1.2" y="1.2" width="27.4" height="27.4" rx="4" fill="none" stroke="#8a8ef0" stroke-width="2"/></svg>
<svg style="left:409.55px;top:972.00px" width="37" height="38"><rect x="-0.5" y="0.6" width="37" height="5.6" rx="2.8" fill="#adb0ee"/><rect x="10.4" y="10.4" width="26.1" height="5.8" rx="2.9" fill="#adb0ee"/><rect x="20.6" y="20.8" width="15.9" height="5.8" rx="2.9" fill="#7b80ee"/><rect x="28" y="31.2" width="8.5" height="5.8" rx="2.9" fill="#adb0ee"/></svg>
<svg style="left:880.50px;top:981.10px" width="20" height="20"><path d="M11.5 0 H20 V8.5 L16.9 5.4 L12.3 10 L10 7.7 L14.6 3.1 Z M8.5 20 H0 V11.5 L3.1 14.6 L7.7 10 L10 12.3 L5.4 16.9 Z" fill="#7a7fee"/></svg>
<svg style="left:930.80px;top:974.70px" width="32" height="34"><rect x="1.3" y="6.5" width="29.4" height="26" rx="1.5" fill="none" stroke="#e0e0e3" stroke-width="2.6"/><rect x="1.3" y="6.5" width="29.4" height="5.5" fill="#e0e0e3"/><rect x="6.2" y="0" width="5.4" height="10" rx="2.7" fill="#e0e0e3"/><rect x="20.4" y="0" width="5.4" height="10" rx="2.7" fill="#e0e0e3"/><rect x="9.6" y="21" width="12.8" height="9" rx="1" fill="#e0e0e3"/><path d="M12.3 21.5 v-2.5 a3.7 3.7 0 0 1 7.4 0 v2.5" fill="none" stroke="#e0e0e3" stroke-width="2.4"/></svg>
<svg style="left:1020.00px;top:975.30px" width="26" height="30"><path d="M1.2 1.2 h15.3 l8.3 8.3 v19.3 h-23.6z" fill="none" stroke="#b7b7b9" stroke-width="2.2" stroke-linejoin="round"/><path d="M16.5 1.2 v8.3 h8.3" fill="none" stroke="#b7b7b9" stroke-width="1.8"/><rect x="6.2" y="14.2" width="13.6" height="2.2" fill="#b7b7b9"/><rect x="6.2" y="18.6" width="13.6" height="2.2" fill="#b7b7b9"/><rect x="6.2" y="23" width="13.6" height="2.2" fill="#b7b7b9"/></svg>
<svg style="left:1131.80px;top:978.10px" width="30" height="28"><rect x="9.5" y="3.2" width="19.7" height="4.2" fill="#b7b7b9"/><text x="0" y="9.600000000000001" font-size="9.5" font-weight="700" fill="#b7b7b9" font-family="Liberation Sans">1</text><rect x="9.5" y="11.6" width="19.7" height="4.2" fill="#b7b7b9"/><text x="0" y="18.0" font-size="9.5" font-weight="700" fill="#b7b7b9" font-family="Liberation Sans">2</text><rect x="9.5" y="20" width="19.7" height="4.2" fill="#b7b7b9"/><text x="0" y="26.4" font-size="9.5" font-weight="700" fill="#b7b7b9" font-family="Liberation Sans">3</text></svg>
<svg style="left:1496.50px;top:963.10px" width="56" height="56" viewBox="-28 -28 56 56"><defs><clipPath id="c6"><circle cx="0" cy="0" r="25.4"/></clipPath><filter id="b6" x="-20%" y="-20%" width="140%" height="140%"><feGaussianBlur stdDeviation="0.9"/></filter><filter id="bb6" x="-30%" y="-30%" width="160%" height="160%"><feGaussianBlur stdDeviation="2.2"/></filter></defs><g clip-path="url(#c6)"><rect x="-27" y="-27" width="54" height="54" fill="#7fae45"/><g filter="url(#bb6)"><ellipse cx="-13" cy="-4" rx="8" ry="12" fill="#f3f8dc"/><ellipse cx="-15" cy="14" rx="9" ry="7" fill="#5c9a2c"/><ellipse cx="0" cy="-22" rx="16" ry="6" fill="#8dc04e"/><ellipse cx="13" cy="-9" rx="4.5" ry="8" fill="#e3efc0"/><rect x="18" y="-20" width="9" height="48" fill="#56584a"/><rect x="-27" y="-8" width="5" height="30" fill="#5b6040"/></g><g filter="url(#b6)"><path d="M1.5 -19.8 C-6 -19.8 -9.8 -14 -10 -7 C-10.2 -1 -12.5 2 -14.5 7 C-17.5 14 -17.5 21 -14 27 L17 27 C20.5 21 20.5 14 17.5 8 C15 3 14 0 13.4 -6 C12.6 -14 9 -19.8 1.5 -19.8z" fill="#523819"/><path d="M-9.5 -3 C-13 1 -12 5 -14.5 9 C-17 13 -14 17 -15.5 21 M-8.5 3 C-11.5 7 -9 11 -11.5 15 C-13 18 -10.5 21 -11.5 25 M13 -2 C16 2 14.5 6 17 10 C19 14 16 18 17.5 22 M11.5 4 C14 8 12 12 14 16 C15.5 19 13 22 13.5 25" stroke="#a8823f" stroke-width="1.8" fill="none"/><path d="M-6.8 -2 C-9 3 -7.5 8 -9.5 12 C-11 16 -9 20 -9.5 24 M9.6 -1 C11.5 4 10 9 12 13 C13.5 17 11.5 21 12 24" stroke="#3a2611" stroke-width="1.8" fill="none"/><path d="M-3.4 6 h9.4 v7 c2.5 2 4 4 5 14 h-19 c1 -9 2 -12 4.6 -14z" fill="#c48e68"/><ellipse cx="1.3" cy="-1.6" rx="7" ry="10.8" fill="#e0b08c"/><path d="M-6.4 -5 C-6 -15 8 -16 9 -5 C7 -12 3 -13.4 1.5 -13.6 C0 -13.4 -4.5 -12 -6.4 -5z" fill="#4a3118"/><rect x="-4.2" y="-4.2" width="3.6" height="1.6" rx=".8" fill="#5a3f33"/><rect x="3" y="-4.2" width="3.6" height="1.6" rx=".8" fill="#5a3f33"/><ellipse cx="1.2" cy="4.4" rx="2.7" ry="1.2" fill="#fff"/><path d="M-1.6 5.6 a2.9 1.6 0 0 0 5.6 0z" fill="#b9555a"/><path d="M-11 24.2 C-5 21.8 7 21.8 13 24.2 V29 H-11z" fill="#93a6bd"/></g></g><circle cx="0" cy="0" r="25.9" fill="none" stroke="#676cd8" stroke-width="1.7"/></svg>
<div style="left:182.20px;top:1020.60px;width:1537.80px;height:65.90px;background:#f5f6f8;"></div>
<div style="left:225.80px;top:1020.60px;width:3.00px;height:64.70px;background:rgba(255,255,255,0.55);"></div>
<div style="left:270.60px;top:1020.60px;width:3.00px;height:64.70px;background:rgba(255,255,255,0.55);"></div>
<div style="left:362.40px;top:1020.60px;width:3.00px;height:64.70px;background:rgba(255,255,255,0.55);"></div>
<div style="left:491.40px;top:1020.60px;width:3.00px;height:64.70px;background:rgba(255,255,255,0.55);"></div>
<div style="left:909.00px;top:1020.60px;width:3.60px;height:64.70px;background:rgba(255,255,255,0.55);"></div>
<div style="left:981.20px;top:1020.60px;width:3.60px;height:64.70px;background:rgba(255,255,255,0.55);"></div>
<div style="left:1082.60px;top:1020.60px;width:3.60px;height:64.70px;background:rgba(255,255,255,0.55);"></div>
<div style="left:1208.00px;top:1020.60px;width:3.60px;height:64.70px;background:rgba(255,255,255,0.55);"></div>
<div style="left:1479.80px;top:1020.60px;width:3.60px;height:64.70px;background:rgba(255,255,255,0.55);"></div>
<svg style="left:0;top:0" width="400" height="1170"><polygon points="250.30,1049.20 252.36,1054.17 257.72,1054.59 253.63,1058.08 254.88,1063.31 250.30,1060.50 245.72,1063.31 246.97,1058.08 242.88,1054.59 248.24,1054.17" fill="none" stroke="#bcbef8" stroke-width="1.5"/></svg>
<svg style="left:303.15px;top:1041.20px" width="30" height="30"><rect x="1.2" y="1.2" width="27.4" height="27.4" rx="4" fill="none" stroke="#8a8ef0" stroke-width="2"/></svg>
<svg style="left:409.55px;top:1036.70px" width="37" height="38"><rect x="-0.5" y="0" width="37" height="6.6" rx="3" fill="#cc0000"/><rect x="10.4" y="10.4" width="26.1" height="5.8" rx="2.9" fill="#adb0ee"/><rect x="20.6" y="20.8" width="15.9" height="5.8" rx="2.9" fill="#adb0ee"/><rect x="28" y="31.2" width="8.5" height="5.8" rx="2.9" fill="#adb0ee"/></svg>
<svg style="left:880.50px;top:1045.80px" width="20" height="20"><path d="M11.5 0 H20 V8.5 L16.9 5.4 L12.3 10 L10 7.7 L14.6 3.1 Z M8.5 20 H0 V11.5 L3.1 14.6 L7.7 10 L10 12.3 L5.4 16.9 Z" fill="#7a7fee"/></svg>
<svg style="left:930.80px;top:1039.40px" width="32" height="34"><rect x="1.3" y="6.5" width="29.4" height="26" rx="1.5" fill="none" stroke="#e0e0e3" stroke-width="2.6"/><rect x="1.3" y="6.5" width="29.4" height="5.5" fill="#e0e0e3"/><rect x="6.2" y="0" width="5.4" height="10" rx="2.7" fill="#e0e0e3"/><rect x="20.4" y="0" width="5.4" height="10" rx="2.7" fill="#e0e0e3"/><rect x="9.6" y="21" width="12.8" height="9" rx="1" fill="#e0e0e3"/><path d="M12.3 21.5 v-2.5 a3.7 3.7 0 0 1 7.4 0 v2.5" fill="none" stroke="#e0e0e3" stroke-width="2.4"/></svg>
<svg style="left:1020.00px;top:1040.00px" width="26" height="30"><path d="M1.2 1.2 h15.3 l8.3 8.3 v19.3 h-23.6z" fill="none" stroke="#b7b7b9" stroke-width="2.2" stroke-linejoin="round"/><path d="M16.5 1.2 v8.3 h8.3" fill="none" stroke="#b7b7b9" stroke-width="1.8"/><rect x="6.2" y="14.2" width="13.6" height="2.2" fill="#b7b7b9"/><rect x="6.2" y="18.6" width="13.6" height="2.2" fill="#b7b7b9"/><rect x="6.2" y="23" width="13.6" height="2.2" fill="#b7b7b9"/></svg>
<svg style="left:1131.80px;top:1042.80px" width="30" height="28"><rect x="9.5" y="3.2" width="19.7" height="4.2" fill="#b7b7b9"/><text x="0" y="9.600000000000001" font-size="9.5" font-weight="700" fill="#b7b7b9" font-family="Liberation Sans">1</text><rect x="9.5" y="11.6" width="19.7" height="4.2" fill="#b7b7b9"/><text x="0" y="18.0" font-size="9.5" font-weight="700" fill="#b7b7b9" font-family="Liberation Sans">2</text><rect x="9.5" y="20" width="19.7" height="4.2" fill="#b7b7b9"/><text x="0" y="26.4" font-size="9.5" font-weight="700" fill="#b7b7b9" font-family="Liberation Sans">3</text></svg>
<svg style="left:1496.50px;top:1027.80px" width="56" height="56" viewBox="-28 -28 56 56"><defs><clipPath id="c7"><circle cx="0" cy="0" r="25.4"/></clipPath><filter id="b7" x="-20%" y="-20%" width="140%" height="140%"><feGaussianBlur stdDeviation="0.9"/></filter><filter id="bb7" x="-30%" y="-30%" width="160%" height="160%"><feGaussianBlur stdDeviation="2.2"/></filter></defs><g clip-path="url(#c7)"><rect x="-27" y="-27" width="54" height="54" fill="#7fae45"/><g filter="url(#bb7)"><ellipse cx="-13" cy="-4" rx="8" ry="12" fill="#f3f8dc"/><ellipse cx="-15" cy="14" rx="9" ry="7" fill="#5c9a2c"/><ellipse cx="0" cy="-22" rx="16" ry="6" fill="#8dc04e"/><ellipse cx="13" cy="-9" rx="4.5" ry="8" fill="#e3efc0"/><rect x="18" y="-20" width="9" height="48" fill="#56584a"/><rect x="-27" y="-8" width="5" height="30" fill="#5b6040"/></g><g filter="url(#b7)"><path d="M1.5 -19.8 C-6 -19.8 -9.8 -14 -10 -7 C-10.2 -1 -12.5 2 -14.5 7 C-17.5 14 -17.5 21 -14 27 L17 27 C20.5 21 20.5 14 17.5 8 C15 3 14 0 13.4 -6 C12.6 -14 9 -19.8 1.5 -19.8z" fill="#523819"/><path d="M-9.5 -3 C-13 1 -12 5 -14.5 9 C-17 13 -14 17 -15.5 21 M-8.5 3 C-11.5 7 -9 11 -11.5 15 C-13 18 -10.5 21 -11.5 25 M13 -2 C16 2 14.5 6 17 10 C19 14 16 18 17.5 22 M11.5 4 C14 8 12 12 14 16 C15.5 19 13 22 13.5 25" stroke="#a8823f" stroke-width="1.8" fill="none"/><path d="M-6.8 -2 C-9 3 -7.5 8 -9.5 12 C-11 16 -9 20 -9.5 24 M9.6 -1 C11.5 4 10 9 12 13 C13.5 17 11.5 21 12 24" stroke="#3a2611" stroke-width="1.8" fill="none"/><path d="M-3.4 6 h9.4 v7 c2.5 2 4 4 5 14 h-19 c1 -9 2 -12 4.6 -14z" fill="#c48e68"/><ellipse cx="1.3" cy="-1.6" rx="7" ry="10.8" fill="#e0b08c"/><path d="M-6.4 -5 C-6 -15 8 -16 9 -5 C7 -12 3 -13.4 1.5 -13.6 C0 -13.4 -4.5 -12 -6.4 -5z" fill="#4a3118"/><rect x="-4.2" y="-4.2" width="3.6" height="1.6" rx=".8" fill="#5a3f33"/><rect x="3" y="-4.2" width="3.6" height="1.6" rx=".8" fill="#5a3f33"/><ellipse cx="1.2" cy="4.4" rx="2.7" ry="1.2" fill="#fff"/><path d="M-1.6 5.6 a2.9 1.6 0 0 0 5.6 0z" fill="#b9555a"/><path d="M-11 24.2 C-5 21.8 7 21.8 13 24.2 V29 H-11z" fill="#93a6bd"/></g></g><circle cx="0" cy="0" r="25.9" fill="none" stroke="#676cd8" stroke-width="1.7"/></svg>
<div style="left:182.20px;top:1085.30px;width:1537.80px;height:65.20px;background:#eff0f5;"></div>
<div style="left:225.80px;top:1085.30px;width:3.00px;height:64.00px;background:rgba(255,255,255,0.55);"></div>
<div style="left:270.60px;top:1085.30px;width:3.00px;height:64.00px;background:rgba(255,255,255,0.55);"></div>
<div style="left:362.40px;top:1085.30px;width:3.00px;height:64.00px;background:rgba(255,255,255,0.55);"></div>
<div style="left:491.40px;top:1085.30px;width:3.00px;height:64.00px;background:rgba(255,255,255,0.55);"></div>
<div style="left:909.00px;top:1085.30px;width:3.60px;height:64.00px;background:rgba(255,255,255,0.55);"></div>
<div style="left:981.20px;top:1085.30px;width:3.60px;height:64.00px;background:rgba(255,255,255,0.55);"></div>
<div style="left:1082.60px;top:1085.30px;width:3.60px;height:64.00px;background:rgba(255,255,255,0.55);"></div>
<div style="left:1208.00px;top:1085.30px;width:3.60px;height:64.00px;background:rgba(255,255,255,0.55);"></div>
<div style="left:1479.80px;top:1085.30px;width:3.60px;height:64.00px;background:rgba(255,255,255,0.55);"></div>
<svg style="left:0;top:0" width="400" height="1170"><polygon points="250.30,1113.90 252.36,1118.87 257.72,1119.29 253.63,1122.78 254.88,1128.01 250.30,1125.20 245.72,1128.01 246.97,1122.78 242.88,1119.29 248.24,1118.87" fill="none" stroke="#bcbef8" stroke-width="1.5"/></svg>
<svg style="left:303.15px;top:1105.90px" width="30" height="30"><rect x="1.2" y="1.2" width="27.4" height="27.4" rx="4" fill="none" stroke="#8a8ef0" stroke-width="2"/></svg>
<svg style="left:409.55px;top:1101.40px" width="37" height="38"><rect x="-0.5" y="0.6" width="37" height="5.6" rx="2.8" fill="#adb0ee"/><rect x="10.4" y="10.4" width="26.1" height="5.8" rx="2.9" fill="#adb0ee"/><rect x="20.6" y="20.8" width="15.9" height="5.8" rx="2.9" fill="#7b80ee"/><rect x="28" y="31.2" width="8.5" height="5.8" rx="2.9" fill="#adb0ee"/></svg>
<svg style="left:880.50px;top:1110.50px" width="20" height="20"><path d="M11.5 0 H20 V8.5 L16.9 5.4 L12.3 10 L10 7.7 L14.6 3.1 Z M8.5 20 H0 V11.5 L3.1 14.6 L7.7 10 L10 12.3 L5.4 16.9 Z" fill="#7a7fee"/></svg>
<svg style="left:930.80px;top:1104.10px" width="32" height="34"><rect x="1.3" y="6.5" width="29.4" height="26" rx="1.5" fill="none" stroke="#e0e0e3" stroke-width="2.6"/><rect x="1.3" y="6.5" width="29.4" height="5.5" fill="#e0e0e3"/><rect x="6.2" y="0" width="5.4" height="10" rx="2.7" fill="#e0e0e3"/><rect x="20.4" y="0" width="5.4" height="10" rx="2.7" fill="#e0e0e3"/><rect x="9.6" y="21" width="12.8" height="9" rx="1" fill="#e0e0e3"/><path d="M12.3 21.5 v-2.5 a3.7 3.7 0 0 1 7.4 0 v2.5" fill="none" stroke="#e0e0e3" stroke-width="2.4"/></svg>
<svg style="left:1020.00px;top:1104.70px" width="26" height="30"><path d="M1.2 1.2 h15.3 l8.3 8.3 v19.3 h-23.6z" fill="none" stroke="#b7b7b9" stroke-width="2.2" stroke-linejoin="round"/><path d="M16.5 1.2 v8.3 h8.3" fill="none" stroke="#b7b7b9" stroke-width="1.8"/><rect x="6.2" y="14.2" width="13.6" height="2.2" fill="#b7b7b9"/><rect x="6.2" y="18.6" width="13.6" height="2.2" fill="#b7b7b9"/><rect x="6.2" y="23" width="13.6" height="2.2" fill="#b7b7b9"/></svg>
<svg style="left:1131.80px;top:1107.50px" width="30" height="28"><rect x="9.5" y="3.2" width="19.7" height="4.2" fill="#b7b7b9"/><text x="0" y="9.600000000000001" font-size="9.5" font-weight="700" fill="#b7b7b9" font-family="Liberation Sans">1</text><rect x="9.5" y="11.6" width="19.7" height="4.2" fill="#b7b7b9"/><text x="0" y="18.0" font-size="9.5" font-weight="700" fill="#b7b7b9" font-family="Liberation Sans">2</text><rect x="9.5" y="20" width="19.7" height="4.2" fill="#b7b7b9"/><text x="0" y="26.4" font-size="9.5" font-weight="700" fill="#b7b7b9" font-family="Liberation Sans">3</text></svg>
<svg style="left:1496.50px;top:1092.50px" width="56" height="56" viewBox="-28 -28 56 56"><defs><clipPath id="c8"><circle cx="0" cy="0" r="25.4"/></clipPath><filter id="b8" x="-20%" y="-20%" width="140%" height="140%"><feGaussianBlur stdDeviation="0.9"/></filter><filter id="bb8" x="-30%" y="-30%" width="160%" height="160%"><feGaussianBlur stdDeviation="2.2"/></filter></defs><g clip-path="url(#c8)"><rect x="-27" y="-27" width="54" height="54" fill="#7fae45"/><g filter="url(#bb8)"><ellipse cx="-13" cy="-4" rx="8" ry="12" fill="#f3f8dc"/><ellipse cx="-15" cy="14" rx="9" ry="7" fill="#5c9a2c"/><ellipse cx="0" cy="-22" rx="16" ry="6" fill="#8dc04e"/><ellipse cx="13" cy="-9" rx="4.5" ry="8" fill="#e3efc0"/><rect x="18" y="-20" width="9" height="48" fill="#56584a"/><rect x="-27" y="-8" width="5" height="30" fill="#5b6040"/></g><g filter="url(#b8)"><path d="M1.5 -19.8 C-6 -19.8 -9.8 -14 -10 -7 C-10.2 -1 -12.5 2 -14.5 7 C-17.5 14 -17.5 21 -14 27 L17 27 C20.5 21 20.5 14 17.5 8 C15 3 14 0 13.4 -6 C12.6 -14 9 -19.8 1.5 -19.8z" fill="#523819"/><path d="M-9.5 -3 C-13 1 -12 5 -14.5 9 C-17 13 -14 17 -15.5 21 M-8.5 3 C-11.5 7 -9 11 -11.5 15 C-13 18 -10.5 21 -11.5 25 M13 -2 C16 2 14.5 6 17 10 C19 14 16 18 17.5 22 M11.5 4 C14 8 12 12 14 16 C15.5 19 13 22 13.5 25" stroke="#a8823f" stroke-width="1.8" fill="none"/><path d="M-6.8 -2 C-9 3 -7.5 8 -9.5 12 C-11 16 -9 20 -9.5 24 M9.6 -1 C11.5 4 10 9 12 13 C13.5 17 11.5 21 12 24" stroke="#3a2611" stroke-width="1.8" fill="none"/><path d="M-3.4 6 h9.4 v7 c2.5 2 4 4 5 14 h-19 c1 -9 2 -12 4.6 -14z" fill="#c48e68"/><ellipse cx="1.3" cy="-1.6" rx="7" ry="10.8" fill="#e0b08c"/><path d="M-6.4 -5 C-6 -15 8 -16 9 -5 C7 -12 3 -13.4 1.5 -13.6 C0 -13.4 -4.5 -12 -6.4 -5z" fill="#4a3118"/><rect x="-4.2" y="-4.2" width="3.6" height="1.6" rx=".8" fill="#5a3f33"/><rect x="3" y="-4.2" width="3.6" height="1.6" rx=".8" fill="#5a3f33"/><ellipse cx="1.2" cy="4.4" rx="2.7" ry="1.2" fill="#fff"/><path d="M-1.6 5.6 a2.9 1.6 0 0 0 5.6 0z" fill="#b9555a"/><path d="M-11 24.2 C-5 21.8 7 21.8 13 24.2 V29 H-11z" fill="#93a6bd"/></g></g><circle cx="0" cy="0" r="25.9" fill="none" stroke="#676cd8" stroke-width="1.7"/></svg>
<div style="left:137.00px;top:1149.30px;width:1583.00px;height:22.20px;background:#f5f6f8;"></div>
<div style="left:180.60px;top:1149.30px;width:3.00px;height:21.00px;background:rgba(255,255,255,0.55);"></div>
<div style="left:225.40px;top:1149.30px;width:3.00px;height:21.00px;background:rgba(255,255,255,0.55);"></div>
<div style="left:317.00px;top:1149.30px;width:3.00px;height:21.00px;background:rgba(255,255,255,0.55);"></div>
<div style="left:446.40px;top:1149.30px;width:3.00px;height:21.00px;background:rgba(255,255,255,0.55);"></div>
<div style="left:909.00px;top:1149.30px;width:3.60px;height:21.00px;background:rgba(255,255,255,0.55);"></div>
<div style="left:981.20px;top:1149.30px;width:3.60px;height:21.00px;background:rgba(255,255,255,0.55);"></div>
<div style="left:1082.60px;top:1149.30px;width:3.60px;height:21.00px;background:rgba(255,255,255,0.55);"></div>
<div style="left:1208.00px;top:1149.30px;width:3.60px;height:21.00px;background:rgba(255,255,255,0.55);"></div>
<div style="left:1479.80px;top:1149.30px;width:3.60px;height:21.00px;background:rgba(255,255,255,0.55);"></div>
<svg style="left:0;top:0" width="1720" height="1170"><rect x="364.7" y="1167.2" width="36.5" height="6.6" rx="3" fill="#adb0ee"/><rect x="259.6" y="1168.8" width="27.4" height="10" rx="4" fill="none" stroke="#8a8ef0" stroke-width="2"/><rect x="937" y="1168.2" width="5.4" height="6" rx="2.7" fill="#dddde0"/><rect x="951.2" y="1168.2" width="5.4" height="6" rx="2.7" fill="#dddde0"/><rect x="1021.2" y="1169" width="16" height="4" fill="none" stroke="#b7b7b9" stroke-width="2.2"/></svg>
<svg style="left:1496.50px;top:1156.50px" width="56" height="56" viewBox="-28 -28 56 56"><defs><clipPath id="c9"><circle cx="0" cy="0" r="25.4"/></clipPath><filter id="b9" x="-20%" y="-20%" width="140%" height="140%"><feGaussianBlur stdDeviation="0.9"/></filter><filter id="bb9" x="-30%" y="-30%" width="160%" height="160%"><feGaussianBlur stdDeviation="2.2"/></filter></defs><g clip-path="url(#c9)"><rect x="-27" y="-27" width="54" height="54" fill="#7fae45"/><g filter="url(#bb9)"><ellipse cx="-13" cy="-4" rx="8" ry="12" fill="#f3f8dc"/><ellipse cx="-15" cy="14" rx="9" ry="7" fill="#5c9a2c"/><ellipse cx="0" cy="-22" rx="16" ry="6" fill="#8dc04e"/><ellipse cx="13" cy="-9" rx="4.5" ry="8" fill="#e3efc0"/><rect x="18" y="-20" width="9" height="48" fill="#56584a"/><rect x="-27" y="-8" width="5" height="30" fill="#5b6040"/></g><g filter="url(#b9)"><path d="M1.5 -19.8 C-6 -19.8 -9.8 -14 -10 -7 C-10.2 -1 -12.5 2 -14.5 7 C-17.5 14 -17.5 21 -14 27 L17 27 C20.5 21 20.5 14 17.5 8 C15 3 14 0 13.4 -6 C12.6 -14 9 -19.8 1.5 -19.8z" fill="#523819"/><path d="M-9.5 -3 C-13 1 -12 5 -14.5 9 C-17 13 -14 17 -15.5 21 M-8.5 3 C-11.5 7 -9 11 -11.5 15 C-13 18 -10.5 21 -11.5 25 M13 -2 C16 2 14.5 6 17 10 C19 14 16 18 17.5 22 M11.5 4 C14 8 12 12 14 16 C15.5 19 13 22 13.5 25" stroke="#a8823f" stroke-width="1.8" fill="none"/><path d="M-6.8 -2 C-9 3 -7.5 8 -9.5 12 C-11 16 -9 20 -9.5 24 M9.6 -1 C11.5 4 10 9 12 13 C13.5 17 11.5 21 12 24" stroke="#3a2611" stroke-width="1.8" fill="none"/><path d="M-3.4 6 h9.4 v7 c2.5 2 4 4 5 14 h-19 c1 -9 2 -12 4.6 -14z" fill="#c48e68"/><ellipse cx="1.3" cy="-1.6" rx="7" ry="10.8" fill="#e0b08c"/><path d="M-6.4 -5 C-6 -15 8 -16 9 -5 C7 -12 3 -13.4 1.5 -13.6 C0 -13.4 -4.5 -12 -6.4 -5z" fill="#4a3118"/><rect x="-4.2" y="-4.2" width="3.6" height="1.6" rx=".8" fill="#5a3f33"/><rect x="3" y="-4.2" width="3.6" height="1.6" rx=".8" fill="#5a3f33"/><ellipse cx="1.2" cy="4.4" rx="2.7" ry="1.2" fill="#fff"/><path d="M-1.6 5.6 a2.9 1.6 0 0 0 5.6 0z" fill="#b9555a"/><path d="M-11 24.2 C-5 21.8 7 21.8 13 24.2 V29 H-11z" fill="#93a6bd"/></g></g><circle cx="0" cy="0" r="25.9" fill="none" stroke="#676cd8" stroke-width="1.7"/></svg>
</div>
<div id="t" style="left:0;top:0;width:1720px;height:1170px;will-change:transform">
<svg style="position:absolute;left:710.60px;top:105.00px;overflow:visible" width="6.30" height="13.60"><path d="M0.95 3.67 L5.25 1.16 L5.25 13.60" fill="none" stroke="#333" stroke-width="2.1" stroke-linejoin="miter" stroke-miterlimit="6"/></svg>
<svg style="position:absolute;left:201.30px;top:500.50px;overflow:visible" width="7.40" height="15.80"><path d="M0.99 4.27 L6.30 1.21 L6.30 15.80" fill="none" stroke="#a9acf6" stroke-width="2.2" stroke-linejoin="miter" stroke-miterlimit="6"/></svg>
<svg style="position:absolute;left:413.85px;top:512.90px;overflow:visible" width="6.20" height="12.00"><path d="M0.77 3.24 L5.35 0.94 L5.35 12.00" fill="none" stroke="#222" stroke-width="1.7" stroke-linejoin="miter" stroke-miterlimit="6"/></svg>
<svg style="position:absolute;left:413.85px;top:642.30px;overflow:visible" width="6.20" height="12.00"><path d="M0.77 3.24 L5.35 0.94 L5.35 12.00" fill="none" stroke="#222" stroke-width="1.7" stroke-linejoin="miter" stroke-miterlimit="6"/></svg>
<svg style="position:absolute;left:1059.75px;top:696.70px;overflow:visible" width="6.25" height="13.60"><path d="M1.08 3.67 L5.05 1.32 L5.05 13.60" fill="none" stroke="#fff" stroke-width="2.4" stroke-linejoin="miter" stroke-miterlimit="6"/></svg>
<svg style="position:absolute;left:1159.30px;top:696.70px;overflow:visible" width="6.30" height="13.60"><path d="M1.08 3.67 L5.10 1.32 L5.10 13.60" fill="none" stroke="#fff" stroke-width="2.4" stroke-linejoin="miter" stroke-miterlimit="6"/></svg>
<svg style="position:absolute;left:413.85px;top:1059.90px;overflow:visible" width="6.20" height="12.00"><path d="M0.77 3.24 L5.35 0.94 L5.35 12.00" fill="none" stroke="#222" stroke-width="1.7" stroke-linejoin="miter" stroke-miterlimit="6"/></svg>
<span style="left:177.99px;top:29.00px;font-size:31.4px;font-weight:400;color:#a6a9f5;transform:scaleX(1.0858);">Project</span>
<span style="left:292.96px;top:29.00px;font-size:31.4px;font-weight:400;color:#a6a9f5;transform:scaleX(1.1473);">Portfolio</span>
<span style="left:496.95px;top:29.00px;font-size:31.4px;font-weight:700;color:#fff;transform:scaleX(1.0500);">Accurate,</span>
<span style="left:654.05px;top:29.00px;font-size:31.4px;font-weight:700;color:#fff;transform:scaleX(1.1000);">Inc.</span>
<span style="left:720.81px;top:29.00px;font-size:31.4px;font-weight:700;color:#fff;transform:scaleX(1.0966);">MP</span>
<span style="left:779.01px;top:29.00px;font-size:31.4px;font-weight:700;color:#fff;transform:scaleX(1.1184);">Implementation</span>
<span style="left:60.96px;top:962.80px;font-size:19.5px;font-weight:700;color:#fff;transform:scaleX(1.0400);">73</span>
<span style="left:827.60px;top:102.60px;font-size:19.6px;font-weight:400;color:#333;transform:scaleX(1.1000);">4</span>
<span style="left:1067.64px;top:102.50px;font-size:19.6px;font-weight:400;color:#fff;transform:scaleX(1.1111);">7</span>
<span style="left:1165.15px;top:100.00px;font-size:20.5px;font-weight:400;color:#fff;transform:scaleX(1.0950);">5</span>
<span style="left:105.30px;top:194.80px;font-size:23.2px;font-weight:400;color:#1c1c1c;transform:scaleX(1.0846);">#</span>
<span style="left:193.01px;top:194.80px;font-size:23.2px;font-weight:400;color:#1c1c1c;transform:scaleX(0.9906);">Status</span>
<span style="left:297.31px;top:194.80px;font-size:23.2px;font-weight:400;color:#1c1c1c;transform:scaleX(1.0443);">Priority</span>
<span style="left:598.33px;top:194.80px;font-size:23.2px;font-weight:400;color:#1c1c1c;transform:scaleX(0.9675);">Task Name</span>
<span style="left:920.82px;top:186.50px;font-size:19.6px;font-weight:400;color:#1c1c1c;transform:scaleX(1.0923);">Lock</span>
<span style="left:916.63px;top:210.30px;font-size:19.6px;font-weight:400;color:#1c1c1c;transform:scaleX(1.0582);">Dates</span>
<span style="left:998.77px;top:194.80px;font-size:23.2px;font-weight:400;color:#1c1c1c;transform:scaleX(1.0172);">Notes</span>
<span style="left:1115.06px;top:194.80px;font-size:23.2px;font-weight:400;color:#1c1c1c;transform:scaleX(0.9414);">Steps</span>
<span style="left:1268.69px;top:194.80px;font-size:23.2px;font-weight:400;color:#1c1c1c;transform:scaleX(0.9569);">Resource Type</span>
<span style="left:1575.40px;top:194.80px;font-size:23.2px;font-weight:400;color:#1c1c1c;">Owner</span>
<span style="left:178.75px;top:263.00px;font-size:25.3px;font-weight:400;color:#161616;transform:scaleX(1.0310);">Accurate,</span>
<span style="left:294.09px;top:263.00px;font-size:25.3px;font-weight:400;color:#161616;transform:scaleX(1.0811);">Inc.</span>
<span style="left:344.25px;top:263.00px;font-size:25.3px;font-weight:400;color:#161616;">MP</span>
<span style="left:387.78px;top:263.00px;font-size:25.3px;font-weight:400;color:#161616;transform:scaleX(1.1112);">Implementation</span>
<span style="left:594.76px;top:266.30px;font-size:19px;font-weight:400;color:#9b9b9b;transform:scaleX(0.9932);">13%</span>
<span style="left:647.65px;top:266.30px;font-size:19px;font-weight:400;color:#9b9b9b;transform:scaleX(1.0991);">(6 / 46)</span>
<span style="left:223.47px;top:342.00px;font-size:25.3px;font-weight:400;color:#161616;transform:scaleX(1.0156);">1.0</span>
<span style="left:265.70px;top:342.00px;font-size:25.3px;font-weight:400;color:#161616;transform:scaleX(1.0505);">Contract</span>
<span style="left:372.14px;top:342.00px;font-size:25.3px;font-weight:400;color:#161616;transform:scaleX(1.0533);">Signed</span>
<span style="left:471.46px;top:345.30px;font-size:19px;font-weight:400;color:#9b9b9b;transform:scaleX(1.0372);">100%</span>
<span style="left:536.40px;top:345.30px;font-size:19px;font-weight:400;color:#9b9b9b;transform:scaleX(1.1011);">(4 / 4)</span>
<span style="left:268.58px;top:421.00px;font-size:25.3px;font-weight:400;color:#161616;transform:scaleX(0.9609);">1.1</span>
<span style="left:310.60px;top:421.00px;font-size:25.3px;font-weight:400;color:#161616;transform:scaleX(0.9511);">Kick</span>
<span style="left:363.83px;top:421.00px;font-size:25.3px;font-weight:400;color:#161616;transform:scaleX(1.1719);">Off</span>
<span style="left:418.98px;top:424.30px;font-size:19px;font-weight:400;color:#9b9b9b;transform:scaleX(1.0213);">100%</span>
<span style="left:483.39px;top:424.30px;font-size:19px;font-weight:400;color:#9b9b9b;transform:scaleX(1.1117);">(3 / 3)</span>
<span style="left:222.73px;top:760.00px;font-size:25.3px;font-weight:400;color:#161616;transform:scaleX(1.0227);">2.0</span>
<span style="left:264.87px;top:760.00px;font-size:25.3px;font-weight:400;color:#161616;transform:scaleX(1.0663);">Development</span>
<span style="left:440.20px;top:763.30px;font-size:19px;font-weight:400;color:#9b9b9b;transform:scaleX(1.0473);">25%</span>
<span style="left:495.15px;top:763.30px;font-size:19px;font-weight:400;color:#9b9b9b;transform:scaleX(1.1011);">(2 / 8)</span>
<span style="left:267.77px;top:839.30px;font-size:25.3px;font-weight:400;color:#161616;transform:scaleX(0.9848);">2.1</span>
<span style="left:309.79px;top:839.30px;font-size:25.3px;font-weight:400;color:#161616;transform:scaleX(1.1047);">Meeting</span>
<span style="left:413.49px;top:839.30px;font-size:25.3px;font-weight:400;color:#161616;transform:scaleX(1.0072);">Series</span>
<span style="left:502.21px;top:842.60px;font-size:19px;font-weight:400;color:#9b9b9b;transform:scaleX(1.0405);">25%</span>
<span style="left:556.89px;top:842.60px;font-size:19px;font-weight:400;color:#9b9b9b;transform:scaleX(1.1064);">(1 / 4)</span>
<span style="left:503.46px;top:497.00px;font-size:22.9px;font-weight:400;color:#161616;transform:scaleX(1.0447);">Schedule</span>
<span style="left:609.19px;top:497.00px;font-size:22.9px;font-weight:400;color:#161616;transform:scaleX(1.0280);">Kick</span>
<span style="left:659.77px;top:497.00px;font-size:22.9px;font-weight:400;color:#161616;transform:scaleX(1.1328);">Off</span>
<span style="left:698.94px;top:497.00px;font-size:22.9px;font-weight:400;color:#161616;transform:scaleX(1.1538);">Meeting</span>
<span style="left:1565.69px;top:496.40px;font-size:22.3px;font-weight:400;color:#161616;transform:scaleX(1.0087);">Connie</span>
<span style="left:1647.58px;top:496.40px;font-size:22.3px;font-weight:400;color:#161616;transform:scaleX(1.0077);">Flict</span>
<span style="left:198.20px;top:562.00px;font-size:22.8px;font-weight:400;color:#a9acf6;transform:scaleX(1.0455);">2</span>
<span style="left:411.15px;top:576.60px;font-size:16.6px;font-weight:400;color:#222;transform:scaleX(1.2000);">3</span>
<span style="left:502.93px;top:561.70px;font-size:22.9px;font-weight:400;color:#161616;transform:scaleX(1.0366);">Kick</span>
<span style="left:553.88px;top:561.70px;font-size:22.9px;font-weight:400;color:#161616;transform:scaleX(1.1207);">Off</span>
<span style="left:593.46px;top:561.70px;font-size:22.9px;font-weight:400;color:#161616;transform:scaleX(1.1442);">Meeting</span>
<span style="left:1565.69px;top:561.10px;font-size:22.3px;font-weight:400;color:#161616;transform:scaleX(1.0087);">Connie</span>
<span style="left:1647.58px;top:561.10px;font-size:22.3px;font-weight:400;color:#161616;transform:scaleX(1.0077);">Flict</span>
<span style="left:198.20px;top:626.70px;font-size:22.8px;font-weight:400;color:#a9acf6;transform:scaleX(1.0455);">3</span>
<span style="left:502.85px;top:626.40px;font-size:22.9px;font-weight:400;color:#161616;transform:scaleX(1.0759);">Prepare</span>
<span style="left:595.95px;top:626.40px;font-size:22.9px;font-weight:400;color:#161616;transform:scaleX(1.0244);">Kick</span>
<span style="left:646.38px;top:626.40px;font-size:22.9px;font-weight:400;color:#161616;transform:scaleX(1.1207);">Off</span>
<span style="left:686.65px;top:626.40px;font-size:22.9px;font-weight:400;color:#161616;transform:scaleX(1.0500);">Deck</span>
<span style="left:1565.69px;top:625.80px;font-size:22.3px;font-weight:400;color:#161616;transform:scaleX(1.0087);">Connie</span>
<span style="left:1647.58px;top:625.80px;font-size:22.3px;font-weight:400;color:#161616;transform:scaleX(1.0077);">Flict</span>
<span style="left:152.41px;top:691.40px;font-size:22.8px;font-weight:400;color:#a9acf6;transform:scaleX(1.1364);">4</span>
<span style="left:366.00px;top:706.00px;font-size:16.6px;font-weight:400;color:#222;transform:scaleX(1.2000);">3</span>
<span style="left:458.92px;top:691.10px;font-size:22.9px;font-weight:400;color:#161616;transform:scaleX(1.0824);">Contract</span>
<span style="left:558.95px;top:691.10px;font-size:22.9px;font-weight:400;color:#161616;transform:scaleX(1.0507);">Signed</span>
<span style="left:639.95px;top:691.10px;font-size:22.9px;font-weight:400;color:#161616;transform:scaleX(1.0242);">Phase</span>
<span style="left:712.66px;top:691.10px;font-size:22.9px;font-weight:400;color:#161616;transform:scaleX(1.0859);">Complete</span>
<span style="left:1219.83px;top:690.50px;font-size:22.3px;font-weight:400;color:#161616;transform:scaleX(1.0345);">Program Manager</span>
<span style="left:1565.69px;top:690.50px;font-size:22.3px;font-weight:400;color:#161616;transform:scaleX(1.0087);">Connie</span>
<span style="left:1647.58px;top:690.50px;font-size:22.3px;font-weight:400;color:#161616;transform:scaleX(1.0077);">Flict</span>
<span style="left:198.38px;top:914.90px;font-size:22.8px;font-weight:400;color:#a9acf6;transform:scaleX(1.0182);">5</span>
<span style="left:411.15px;top:929.50px;font-size:16.6px;font-weight:400;color:#222;transform:scaleX(1.2000);">3</span>
<span style="left:502.52px;top:914.60px;font-size:22.9px;font-weight:400;color:#161616;transform:scaleX(1.1385);">Meeting</span>
<span style="left:601.80px;top:914.60px;font-size:22.9px;font-weight:400;color:#161616;">#1</span>
<span style="left:1565.69px;top:914.00px;font-size:22.3px;font-weight:400;color:#161616;transform:scaleX(1.0087);">Connie</span>
<span style="left:1647.58px;top:914.00px;font-size:22.3px;font-weight:400;color:#161616;transform:scaleX(1.0077);">Flict</span>
<span style="left:198.20px;top:979.60px;font-size:22.8px;font-weight:400;color:#a9acf6;transform:scaleX(1.0455);">6</span>
<span style="left:411.15px;top:994.20px;font-size:16.6px;font-weight:400;color:#222;transform:scaleX(1.2000);">3</span>
<span style="left:502.52px;top:979.30px;font-size:22.9px;font-weight:400;color:#161616;transform:scaleX(1.1385);">Meeting</span>
<span style="left:601.80px;top:979.30px;font-size:22.9px;font-weight:400;color:#161616;transform:scaleX(1.1125);">#2</span>
<span style="left:1565.69px;top:978.70px;font-size:22.3px;font-weight:400;color:#161616;transform:scaleX(1.0087);">Connie</span>
<span style="left:1647.58px;top:978.70px;font-size:22.3px;font-weight:400;color:#161616;transform:scaleX(1.0077);">Flict</span>
<span style="left:198.20px;top:1044.30px;font-size:22.8px;font-weight:400;color:#a9acf6;transform:scaleX(1.0455);">7</span>
<span style="left:503.80px;top:1044.00px;font-size:22.9px;font-weight:400;color:#161616;">Send</span>
<span style="left:563.79px;top:1044.00px;font-size:22.9px;font-weight:400;color:#161616;transform:scaleX(1.0559);">File</span>
<span style="left:1565.69px;top:1043.40px;font-size:22.3px;font-weight:400;color:#161616;transform:scaleX(1.0087);">Connie</span>
<span style="left:1647.58px;top:1043.40px;font-size:22.3px;font-weight:400;color:#161616;transform:scaleX(1.0077);">Flict</span>
<span style="left:198.38px;top:1109.00px;font-size:22.8px;font-weight:400;color:#a9acf6;transform:scaleX(1.0182);">8</span>
<span style="left:411.15px;top:1123.60px;font-size:16.6px;font-weight:400;color:#222;transform:scaleX(1.2000);">3</span>
<span style="left:502.52px;top:1108.70px;font-size:22.9px;font-weight:400;color:#161616;transform:scaleX(1.1385);">Meeting</span>
<span style="left:601.80px;top:1108.70px;font-size:22.9px;font-weight:400;color:#161616;transform:scaleX(1.0680);">#3</span>
<span style="left:1565.69px;top:1108.10px;font-size:22.3px;font-weight:400;color:#161616;transform:scaleX(1.0087);">Connie</span>
<span style="left:1647.58px;top:1108.10px;font-size:22.3px;font-weight:400;color:#161616;transform:scaleX(1.0077);">Flict</span>
</div>
</body></html>
